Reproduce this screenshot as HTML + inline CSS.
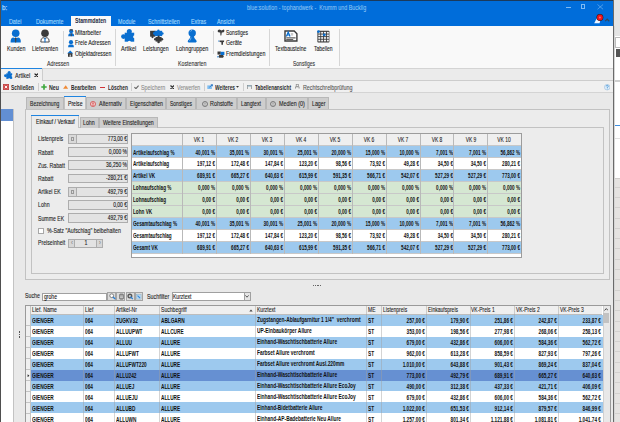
<!DOCTYPE html>
<html><head><meta charset="utf-8"><style>
html,body{margin:0;padding:0;}
body{width:620px;height:422px;overflow:hidden;position:relative;background:#ececec;font-family:'Liberation Sans', sans-serif;}
.b{position:absolute;}
.t{position:absolute;white-space:nowrap;line-height:1;}
</style></head><body>
<div class="b" style="left:614.00px;top:0.00px;width:6.00px;height:422.00px;background:#ffffff"></div>
<div class="b" style="left:614.00px;top:0.00px;width:6.00px;height:36.00px;background:#e4e4e4"></div>
<div class="b" style="left:614.50px;top:37.00px;width:5.50px;height:9.00px;background:#fff;border:1px solid #bbb;border-right:none;border-radius:1px"></div>
<div class="b" style="left:615.50px;top:49.00px;width:4.50px;height:8.00px;background:#555"></div>
<div class="b" style="left:614.00px;top:80.00px;width:6.00px;height:2.00px;background:#cfcfcf"></div>
<div class="b" style="left:614.00px;top:125.00px;width:6.00px;height:1.00px;background:#3d8ee0"></div>
<div class="b" style="left:614.00px;top:138.00px;width:6.00px;height:0.80px;background:#e2e2e2"></div>
<div class="b" style="left:614.00px;top:177.80px;width:6.00px;height:245.00px;background:#e5e3e1"></div>
<div class="b" style="left:614.00px;top:177.80px;width:6.00px;height:0.80px;background:#d0cecc"></div>
<div class="b" style="left:614.00px;top:186.60px;width:6.00px;height:0.90px;background:#d3d1cf"></div>
<div class="b" style="left:614.00px;top:196.90px;width:6.00px;height:0.90px;background:#d3d1cf"></div>
<div class="b" style="left:614.00px;top:207.20px;width:6.00px;height:0.90px;background:#d3d1cf"></div>
<div class="b" style="left:614.00px;top:217.50px;width:6.00px;height:0.90px;background:#d3d1cf"></div>
<div class="b" style="left:614.00px;top:227.80px;width:6.00px;height:0.90px;background:#d3d1cf"></div>
<div class="b" style="left:614.00px;top:238.10px;width:6.00px;height:0.90px;background:#d3d1cf"></div>
<div class="b" style="left:614.00px;top:248.40px;width:6.00px;height:0.90px;background:#d3d1cf"></div>
<div class="b" style="left:614.00px;top:258.70px;width:6.00px;height:0.90px;background:#d3d1cf"></div>
<div class="b" style="left:614.00px;top:269.00px;width:6.00px;height:0.90px;background:#d3d1cf"></div>
<div class="b" style="left:614.00px;top:279.30px;width:6.00px;height:0.90px;background:#d3d1cf"></div>
<div class="b" style="left:614.00px;top:289.60px;width:6.00px;height:0.90px;background:#d3d1cf"></div>
<div class="b" style="left:614.00px;top:299.90px;width:6.00px;height:0.90px;background:#d3d1cf"></div>
<div class="b" style="left:614.00px;top:310.20px;width:6.00px;height:0.90px;background:#d3d1cf"></div>
<div class="b" style="left:614.00px;top:320.50px;width:6.00px;height:0.90px;background:#d3d1cf"></div>
<div class="b" style="left:614.00px;top:330.80px;width:6.00px;height:0.90px;background:#d3d1cf"></div>
<div class="b" style="left:614.00px;top:341.10px;width:6.00px;height:0.90px;background:#d3d1cf"></div>
<div class="b" style="left:614.00px;top:351.40px;width:6.00px;height:0.90px;background:#d3d1cf"></div>
<div class="b" style="left:614.00px;top:361.70px;width:6.00px;height:0.90px;background:#d3d1cf"></div>
<div class="b" style="left:614.00px;top:372.00px;width:6.00px;height:0.90px;background:#d3d1cf"></div>
<div class="b" style="left:614.00px;top:382.30px;width:6.00px;height:0.90px;background:#d3d1cf"></div>
<div class="b" style="left:614.00px;top:392.60px;width:6.00px;height:0.90px;background:#d3d1cf"></div>
<div class="b" style="left:614.00px;top:402.90px;width:6.00px;height:0.90px;background:#d3d1cf"></div>
<div class="b" style="left:614.00px;top:413.20px;width:6.00px;height:0.90px;background:#d3d1cf"></div>
<div class="b" style="left:614.00px;top:423.50px;width:6.00px;height:0.90px;background:#d3d1cf"></div>
<div class="b" style="left:0.00px;top:0.00px;width:613.00px;height:422.00px;background:#e9e9e9"></div>
<div class="b" style="left:0.00px;top:0.00px;width:613.00px;height:26.00px;background:#006dda"></div>
<div class="b" style="left:0.00px;top:0.00px;width:614.00px;height:1.00px;background:#1b3a5c"></div>
<div class="b" style="left:0.00px;top:0.00px;width:1.00px;height:422.00px;background:#4f4f4f"></div>
<div class="t" style="left:2.00px;top:4.62px;font-size:7.17px;color:#a8d4fb;-webkit-text-stroke:0.25px #a8d4fb;transform:scaleX(0.8929);transform-origin:0 50%;">b:</div>
<div class="t" style="left:246.80px;top:5.05px;font-size:6.50px;color:#93c8f6;-webkit-text-stroke:0.06px #93c8f6;transform:scaleX(0.8308);transform-origin:0 50%;">blue:solution - tophandwerk - &nbsp;Krumm und Bucklig</div>
<div class="b" style="left:566.40px;top:6.90px;width:5.00px;height:0.60px;background:#7fbaf2"></div>
<div class="b" style="left:580.60px;top:4.40px;width:4.80px;height:4.80px;border:0.6px solid #7fbaf2;box-sizing:border-box"></div>
<svg class="b" style="left:597.20px;top:4.20px" width="6.6" height="5.8" viewBox="0 0 6.6 5.8"><path d="M0.5 0.5 L6.1 5.3 M6.1 0.5 L0.5 5.3" stroke="#7fbaf2" stroke-width="0.6"/></svg>
<svg class="b" style="left:592.00px;top:12.00px" width="20" height="12" viewBox="0 0 20 12"><path d="M2.2 11.2 L5.2 5.5 L8.6 6.5 L7.6 11.2 Z" fill="#eef6ff"/><circle cx="7.9" cy="5.5" r="3.4" fill="#2a1a1a"/><circle cx="7.9" cy="5.5" r="2.9" fill="#f0141c"/><circle cx="7.9" cy="5.5" r="1" fill="#ff6a6a"/><path d="M13.2 9.2 L15.2 7.2 L17.3 9.2" stroke="#33485c" stroke-width="1.2" fill="none"/></svg>
<div class="b" style="left:70.75px;top:15.80px;width:40.00px;height:10.40px;background:#f9f9f9"></div>
<div class="t" style="left:8.75px;top:18.85px;font-size:6.50px;color:#9fd6fd;-webkit-text-stroke:0.15px #9fd6fd;transform:scaleX(0.8231);transform-origin:0 50%;">Datei</div>
<div class="t" style="left:36.25px;top:18.85px;font-size:6.50px;color:#9fd6fd;-webkit-text-stroke:0.15px #9fd6fd;transform:scaleX(0.8231);transform-origin:0 50%;">Dokumente</div>
<div class="t" style="left:117.50px;top:18.85px;font-size:6.50px;color:#9fd6fd;-webkit-text-stroke:0.15px #9fd6fd;transform:scaleX(0.8231);transform-origin:0 50%;">Module</div>
<div class="t" style="left:147.50px;top:18.85px;font-size:6.50px;color:#9fd6fd;-webkit-text-stroke:0.15px #9fd6fd;transform:scaleX(0.8231);transform-origin:0 50%;">Schnittstellen</div>
<div class="t" style="left:191.25px;top:18.85px;font-size:6.50px;color:#9fd6fd;-webkit-text-stroke:0.15px #9fd6fd;transform:scaleX(0.8231);transform-origin:0 50%;">Extras</div>
<div class="t" style="left:217.00px;top:18.85px;font-size:6.50px;color:#9fd6fd;-webkit-text-stroke:0.15px #9fd6fd;transform:scaleX(0.8231);transform-origin:0 50%;">Ansicht</div>
<div class="t" style="left:75.00px;top:18.35px;font-size:6.50px;font-weight:bold;color:#1d2b44;transform:scaleX(0.8000);transform-origin:0 50%;">Stammdaten</div>
<div class="b" style="left:1.00px;top:26.00px;width:612.00px;height:42.00px;background:#f9f9f9"></div>
<div class="b" style="left:63.10px;top:31.30px;width:0.90px;height:22.50px;background:#d6d6d6"></div>
<div class="b" style="left:114.80px;top:28.90px;width:0.90px;height:36.70px;background:#d6d6d6"></div>
<div class="b" style="left:213.30px;top:31.00px;width:0.90px;height:22.80px;background:#d6d6d6"></div>
<div class="b" style="left:269.00px;top:28.50px;width:0.90px;height:37.10px;background:#d6d6d6"></div>
<div class="b" style="left:338.90px;top:28.70px;width:0.90px;height:36.90px;background:#d6d6d6"></div>
<div class="t" style="left:6.80px;top:45.85px;font-size:6.50px;color:#1a1a1a;-webkit-text-stroke:0.1px #1a1a1a;transform:scaleX(0.8215);transform-origin:0 50%;">Kunden</div>
<div class="t" style="left:31.90px;top:45.85px;font-size:6.50px;color:#1a1a1a;-webkit-text-stroke:0.1px #1a1a1a;transform:scaleX(0.8031);transform-origin:0 50%;">Lieferanten</div>
<div class="t" style="left:121.20px;top:45.85px;font-size:6.50px;color:#1a1a1a;-webkit-text-stroke:0.1px #1a1a1a;transform:scaleX(0.8462);transform-origin:0 50%;">Artikel</div>
<div class="t" style="left:143.30px;top:46.35px;font-size:6.50px;color:#1a1a1a;-webkit-text-stroke:0.1px #1a1a1a;transform:scaleX(0.8077);transform-origin:0 50%;">Leistungen</div>
<div class="t" style="left:175.80px;top:45.85px;font-size:6.50px;color:#1a1a1a;-webkit-text-stroke:0.1px #1a1a1a;transform:scaleX(0.8462);transform-origin:0 50%;">Lohngruppen</div>
<div class="t" style="left:275.40px;top:45.85px;font-size:6.50px;color:#1a1a1a;-webkit-text-stroke:0.1px #1a1a1a;transform:scaleX(0.7831);transform-origin:0 50%;">Textbausteine</div>
<div class="t" style="left:314.40px;top:45.85px;font-size:6.50px;color:#1a1a1a;-webkit-text-stroke:0.1px #1a1a1a;transform:scaleX(0.7692);transform-origin:0 50%;">Tabellen</div>
<div class="t" style="left:75.00px;top:29.75px;font-size:6.50px;color:#1a1a1a;-webkit-text-stroke:0.1px #1a1a1a;transform:scaleX(0.8462);transform-origin:0 50%;">Mitarbeiter</div>
<div class="t" style="left:75.00px;top:40.05px;font-size:6.50px;color:#1a1a1a;-webkit-text-stroke:0.1px #1a1a1a;transform:scaleX(0.8154);transform-origin:0 50%;">Freie Adressen</div>
<div class="t" style="left:75.00px;top:50.95px;font-size:6.50px;color:#1a1a1a;-webkit-text-stroke:0.1px #1a1a1a;transform:scaleX(0.7969);transform-origin:0 50%;">Objektadressen</div>
<div class="t" style="left:225.50px;top:29.55px;font-size:6.50px;color:#1a1a1a;-webkit-text-stroke:0.1px #1a1a1a;transform:scaleX(0.7692);transform-origin:0 50%;">Sonstiges</div>
<div class="t" style="left:225.50px;top:40.15px;font-size:6.50px;color:#1a1a1a;-webkit-text-stroke:0.1px #1a1a1a;transform:scaleX(0.8000);transform-origin:0 50%;">Geräte</div>
<div class="t" style="left:225.50px;top:50.75px;font-size:6.50px;color:#1a1a1a;-webkit-text-stroke:0.1px #1a1a1a;transform:scaleX(0.8123);transform-origin:0 50%;">Fremdleistungen</div>
<div class="t" style="left:47.40px;top:61.45px;font-size:6.50px;color:#333;-webkit-text-stroke:0.1px #333;transform:scaleX(0.8077);transform-origin:0 50%;">Adressen</div>
<div class="t" style="left:177.70px;top:61.45px;font-size:6.50px;color:#333;-webkit-text-stroke:0.1px #333;transform:scaleX(0.8123);transform-origin:0 50%;">Kostenarten</div>
<div class="t" style="left:292.80px;top:61.45px;font-size:6.50px;color:#333;-webkit-text-stroke:0.1px #333;transform:scaleX(0.7692);transform-origin:0 50%;">Sonstiges</div>
<svg class="b" style="left:10.00px;top:29.00px" width="12" height="14" viewBox="0 0 12 14"><circle cx="5.7" cy="4.2" r="3.8" fill="#0a6fd0"/><path d="M0.6 13.5 Q0.4 9 3 8.4 L5.7 9.2 L8.4 8.4 Q11 9 10.8 13.5 Z" fill="#0a6fd0"/><path d="M5 8.6 L6.4 8.6 L6.2 13.5 L5.2 13.5 Z" fill="#444"/></svg>
<svg class="b" style="left:39.50px;top:29.00px" width="12" height="14" viewBox="0 0 12 14"><circle cx="5" cy="4.2" r="3.8" fill="#3b3b3b"/><path d="M0.8 13 Q0.6 9.3 3 8.6 L5 9.4 L7 8.6 Q9.4 9.3 9.2 13 Z" fill="#fff" stroke="#3b3b3b" stroke-width="0.9"/><path d="M4.4 8.8 L5.6 8.8 L5.5 13.4 L4.5 13.4 Z" fill="#0a6fd0"/></svg>
<svg class="b" style="left:67.50px;top:28.80px" width="7" height="8" viewBox="0 0 7 8"><circle cx="3.2" cy="2.3" r="2" fill="#0a6fd0"/><path d="M1.2 1.6 L5.2 1.6 L4.6 0.3 L1.8 0.3Z" fill="#444"/><path d="M0.2 7.2 Q0.2 4.6 1.8 4.3 L4.6 4.3 Q6.2 4.6 6.2 7.2 Z" fill="#0a6fd0"/><rect x="2.8" y="4.3" width="0.9" height="2.9" fill="#444"/></svg>
<svg class="b" style="left:67.80px;top:39.50px" width="7" height="8" viewBox="0 0 7 8"><circle cx="3" cy="2.2" r="2.1" fill="#0a6fd0"/><path d="M0.1 7.3 Q0 4.7 1.7 4.5 L4.3 4.5 Q6 4.7 5.9 7.3 Z" fill="#0a6fd0"/></svg>
<svg class="b" style="left:67.40px;top:50.30px" width="7" height="7" viewBox="0 0 7 7"><path d="M0.2 3.4 L3.2 0.4 L6.3 3.4 Z" fill="#0a6fd0"/><rect x="1" y="3.2" width="4.4" height="3.6" fill="#3a3a3a"/><rect x="2.6" y="4.6" width="1.3" height="2.2" fill="#ccc"/></svg>
<svg class="b" style="left:121.00px;top:29.20px" width="15.0" height="15.0" viewBox="0 0 15.0 15.0"><g transform="scale(1.0)"><rect x="3.7" y="3.7" width="9.5" height="9" fill="#0a6fd0"/><circle cx="8.3" cy="2.6" r="2.5" fill="#0a6fd0"/><circle cx="2.5" cy="7.6" r="2.4" fill="#0a6fd0"/><circle cx="13.6" cy="7.8" r="1.5" fill="#f9f9f9"/><circle cx="8.4" cy="13.4" r="1.6" fill="#f9f9f9"/></g></svg>
<svg class="b" style="left:149.00px;top:29.00px" width="15" height="15" viewBox="0 0 15 15"><rect x="1.1" y="1.8" width="5.1" height="5.9" fill="#3b3b3b"/><circle cx="3.5" cy="8.1" r="1.1" fill="#3b3b3b"/><rect x="5.6" y="1.8" width="7.6" height="5.3" fill="#0a6fd0"/><circle cx="5.4" cy="4.5" r="1.4" fill="#0a6fd0"/><circle cx="13.3" cy="4.5" r="1.3" fill="#0a6fd0"/><circle cx="9.4" cy="1.8" r="1.2" fill="#0a6fd0"/><rect x="6.6" y="8" width="6" height="4.6" fill="#3b3b3b"/><circle cx="6.2" cy="10.3" r="1.2" fill="#3b3b3b"/><circle cx="13" cy="10.3" r="1.2" fill="#3b3b3b"/><circle cx="9.6" cy="13" r="1.3" fill="#3b3b3b"/><circle cx="9.6" cy="7.6" r="1.1" fill="#3b3b3b"/></svg>
<svg class="b" style="left:187.00px;top:29.30px" width="11" height="14" viewBox="0 0 11 14"><circle cx="5.2" cy="4.1" r="3.7" fill="#0a6fd0"/><path d="M3.6 6.8 L6.8 6.8 Q6.9 9.6 9.4 11.6 Q10.3 13.4 8.8 13.4 L1.6 13.4 Q0.1 13.4 1 11.6 Q3.5 9.6 3.6 6.8 Z" fill="#0a6fd0"/><path d="M3.2 2.6 Q3.8 1.5 5 1.5 M2.6 11.8 Q3.6 10.2 4.2 8.6" stroke="#d8ebfb" stroke-width="0.5" fill="none"/></svg>
<svg class="b" style="left:216.80px;top:29.20px" width="8" height="7" viewBox="0 0 8 7"><path d="M0.6 2.3 Q0.6 0.4 2.6 0.5 L4.6 1.4 L6.6 0.5 Q7.6 0.6 7.4 2.3 Q7 3.6 4.8 3.5 L4.3 6.6 L3.5 6.6 L3.2 3.5 Q0.9 3.6 0.6 2.3 Z" fill="#3b3b3b"/></svg>
<svg class="b" style="left:217.60px;top:40.30px" width="7" height="5.5" viewBox="0 0 7 5.5"><rect x="0.2" y="0.6" width="1.2" height="0.9" fill="#0a6fd0"/><path d="M1.6 0.6 L6.2 0.6 L6 2 L5 2.2 L5 4.8 L3.4 4.8 L3.4 2.2 L1.6 2 Z" fill="#3b3b3b"/></svg>
<svg class="b" style="left:216.80px;top:50.60px" width="8" height="7" viewBox="0 0 8 7"><path d="M0.5 0.5 L3.8 0.5 L3.8 3.6 L0.5 3.6 Z" fill="#3b3b3b"/><path d="M3.6 0.8 L7.4 0.8 L7.4 4 L3.6 4 Z" fill="#0a6fd0"/><path d="M2.2 4 L6.2 4 L6.7 5.4 L6 6.8 L2.2 6.8 L1.6 5.4 Z" fill="#3b3b3b"/><rect x="0.3" y="5.2" width="1.2" height="1.2" fill="#0a6fd0"/></svg>
<svg class="b" style="left:284.20px;top:30.40px" width="14" height="12" viewBox="0 0 14 12"><path d="M1 1 L10.2 1 L12.9 3.7 L12.9 11 L1 11 Z" fill="#fff" stroke="#3b3b3b" stroke-width="1.4"/><path d="M2.4 6.4 L4.2 2.2 L6 6.4" stroke="#0a6fd0" stroke-width="1.3" fill="none"/><path d="M3 5 L5.4 5" stroke="#0a6fd0" stroke-width="0.9"/><rect x="6.8" y="3" width="2.4" height="2.6" fill="#c8c8c8"/><rect x="2.2" y="7.4" width="9.4" height="1" fill="#3b3b3b"/><rect x="2.2" y="9.2" width="7" height="0.8" fill="#3b3b3b"/></svg>
<svg class="b" style="left:317.00px;top:29.60px" width="13" height="13" viewBox="0 0 13 13"><rect x="0.4" y="0.8" width="12" height="11.8" rx="0.8" fill="#3b3b3b"/><rect x="1.30" y="1.90" width="2.0" height="1.7" fill="#f2f2f2"/><rect x="1.30" y="4.50" width="2.0" height="1.7" fill="#f2f2f2"/><rect x="1.30" y="7.10" width="2.0" height="1.7" fill="#f2f2f2"/><rect x="1.30" y="9.70" width="2.0" height="1.7" fill="#f2f2f2"/><rect x="4.15" y="1.90" width="2.0" height="1.7" fill="#f2f2f2"/><rect x="4.15" y="4.50" width="2.0" height="1.7" fill="#f2f2f2"/><rect x="4.15" y="7.10" width="2.0" height="1.7" fill="#f2f2f2"/><rect x="4.15" y="9.70" width="2.0" height="1.7" fill="#f2f2f2"/><rect x="7.00" y="1.90" width="2.0" height="1.7" fill="#f2f2f2"/><rect x="7.00" y="4.50" width="2.0" height="1.7" fill="#f2f2f2"/><rect x="7.00" y="7.10" width="2.0" height="1.7" fill="#f2f2f2"/><rect x="7.00" y="9.70" width="2.0" height="1.7" fill="#f2f2f2"/><rect x="9.85" y="1.90" width="2.0" height="1.7" fill="#f2f2f2"/><rect x="9.85" y="4.50" width="2.0" height="1.7" fill="#f2f2f2"/><rect x="9.85" y="7.10" width="2.0" height="1.7" fill="#f2f2f2"/><rect x="9.85" y="9.70" width="2.0" height="1.7" fill="#f2f2f2"/><circle cx="1.5" cy="1.6" r="1.4" fill="#0a6fd0"/><circle cx="7.3" cy="4.8" r="1.4" fill="#0a6fd0"/></svg>
<div class="b" style="left:1.00px;top:68.00px;width:612.00px;height:12.20px;background:#ebebeb"></div>
<div class="b" style="left:1.00px;top:68.00px;width:612.00px;height:0.90px;background:#d4d4d4"></div>
<div class="b" style="left:42.00px;top:80.00px;width:571.00px;height:0.90px;background:#cdcdcd"></div>
<div class="b" style="left:1.00px;top:68.00px;width:41.30px;height:12.50px;background:#f0f0f0"></div>
<div class="b" style="left:1.00px;top:68.00px;width:41.30px;height:1.30px;background:#1f84e0"></div>
<div class="b" style="left:41.80px;top:68.00px;width:0.90px;height:12.30px;background:#cdcdcd"></div>
<svg class="b" style="left:3.80px;top:70.60px" width="9.3" height="9.3" viewBox="0 0 9.3 9.3"><g transform="scale(0.62)"><rect x="3.7" y="3.7" width="9.5" height="9" fill="#0a6fd0"/><circle cx="8.3" cy="2.6" r="2.5" fill="#0a6fd0"/><circle cx="2.5" cy="7.6" r="2.4" fill="#0a6fd0"/><circle cx="13.6" cy="7.8" r="1.5" fill="#f0f0f0"/><circle cx="8.4" cy="13.4" r="1.6" fill="#f0f0f0"/></g></svg>
<div class="t" style="left:14.70px;top:73.35px;font-size:6.50px;color:#222;-webkit-text-stroke:0.1px #222;transform:scaleX(0.8462);transform-origin:0 50%;">Artikel</div>
<svg class="b" style="left:33.60px;top:73.10px" width="4.6" height="4.4" viewBox="0 0 4.6 4.4"><path d="M0.6 0.6 L4 3.8 M4 0.6 L0.6 3.8" stroke="#1a1a1a" stroke-width="1.25"/></svg>
<div class="b" style="left:1.00px;top:80.90px;width:612.00px;height:11.80px;background:#f0f0f0"></div>
<div class="b" style="left:1.00px;top:92.40px;width:612.00px;height:0.90px;background:#d4d4d4"></div>
<div class="b" style="left:37.50px;top:83.30px;width:0.80px;height:8.20px;background:#cfcfcf"></div>
<div class="b" style="left:130.75px;top:83.30px;width:0.80px;height:8.20px;background:#cfcfcf"></div>
<div class="b" style="left:203.75px;top:83.30px;width:0.80px;height:8.20px;background:#cfcfcf"></div>
<div class="b" style="left:242.50px;top:83.30px;width:0.80px;height:8.20px;background:#cfcfcf"></div>
<svg class="b" style="left:3.00px;top:84.40px" width="6" height="6" viewBox="0 0 6 6"><rect x="0.3" y="0.3" width="5.4" height="5.4" fill="#d24a4a" stroke="#b83535" stroke-width="0.6"/><path d="M1.8 1.8 L4.2 4.2 M4.2 1.8 L1.8 4.2" stroke="#fff" stroke-width="0.9"/></svg>
<svg class="b" style="left:40.80px;top:84.20px" width="6" height="6" viewBox="0 0 6 6"><path d="M3 0.3 L3 5.7 M0.3 3 L5.7 3" stroke="#3aa63a" stroke-width="1.6"/></svg>
<svg class="b" style="left:63.00px;top:85.20px" width="5.4" height="4" viewBox="0 0 5.4 4"><path d="M2.7 0.3 L5.3 3.8 L0.1 3.8 Z" fill="#f08a35"/></svg>
<svg class="b" style="left:99.50px;top:86.60px" width="5.6" height="1.4" viewBox="0 0 5.6 1.4"><rect x="0" y="0" width="5.6" height="1.3" fill="#d13438"/></svg>
<svg class="b" style="left:134.20px;top:84.60px" width="5" height="4.4" viewBox="0 0 5 4.4"><path d="M0.4 2.2 L1.9 3.7 L4.6 0.6" stroke="#666" stroke-width="1.1" fill="none"/></svg>
<svg class="b" style="left:169.50px;top:84.80px" width="4.6" height="4.4" viewBox="0 0 4.6 4.4"><path d="M0.5 0.5 L4.1 3.9 M4.1 0.5 L0.5 3.9" stroke="#333" stroke-width="1.3"/></svg>
<svg class="b" style="left:207.00px;top:84.40px" width="6" height="5.4" viewBox="0 0 6 5.4"><rect x="0.3" y="1.4" width="4.6" height="3.6" fill="#7fbdf0"/><path d="M2.4 3.2 L5.4 0.8 M3.8 0.7 L5.5 0.7 L5.5 2.3" stroke="#1f6fc0" stroke-width="0.8" fill="none"/></svg>
<svg class="b" style="left:236.30px;top:86.40px" width="3" height="2" viewBox="0 0 3 2"><path d="M0 0 L3 0 L1.5 1.8 Z" fill="#333"/></svg>
<svg class="b" style="left:246.80px;top:84.50px" width="5" height="4.8" viewBox="0 0 5 4.8"><rect x="0.4" y="0.4" width="4.2" height="4" fill="#eee" stroke="#777" stroke-width="0.6"/><rect x="0.4" y="0.4" width="4.2" height="1.1" fill="#8ab"/></svg>
<svg class="b" style="left:295.00px;top:84.40px" width="4.6" height="5" viewBox="0 0 4.6 5"><rect x="1.2" y="0.3" width="2.2" height="2" fill="none" stroke="#8a8a8a" stroke-width="0.7"/><path d="M0.5 4.6 L0.5 2.8 L4.1 2.8 L4.1 4.6" stroke="#8a8a8a" stroke-width="0.8" fill="none"/></svg>
<div class="t" style="left:11.25px;top:84.55px;font-size:6.50px;font-weight:bold;color:#2b2b2b;transform:scaleX(0.7492);transform-origin:0 50%;">Schließen</div>
<div class="t" style="left:48.75px;top:84.55px;font-size:6.50px;font-weight:bold;color:#2b2b2b;transform:scaleX(0.8154);transform-origin:0 50%;">Neu</div>
<div class="t" style="left:70.75px;top:84.55px;font-size:6.50px;font-weight:bold;color:#2b2b2b;transform:scaleX(0.7446);transform-origin:0 50%;">Bearbeiten</div>
<div class="t" style="left:107.50px;top:84.55px;font-size:6.50px;font-weight:bold;color:#2b2b2b;transform:scaleX(0.7477);transform-origin:0 50%;">Löschen</div>
<div class="t" style="left:141.25px;top:84.55px;font-size:6.50px;color:#8c8c8c;-webkit-text-stroke:0.1px #8c8c8c;transform:scaleX(0.8308);transform-origin:0 50%;">Speichern</div>
<div class="t" style="left:176.75px;top:84.55px;font-size:6.50px;color:#8c8c8c;-webkit-text-stroke:0.1px #8c8c8c;transform:scaleX(0.7938);transform-origin:0 50%;">Verwerfen</div>
<div class="t" style="left:215.00px;top:84.55px;font-size:6.50px;font-weight:bold;color:#2b2b2b;transform:scaleX(0.7415);transform-origin:0 50%;">Weiteres</div>
<div class="t" style="left:254.50px;top:84.55px;font-size:6.50px;font-weight:bold;color:#2b2b2b;transform:scaleX(0.7400);transform-origin:0 50%;">Tabellenansicht</div>
<div class="t" style="left:302.50px;top:84.55px;font-size:6.50px;color:#555555;-webkit-text-stroke:0.1px #555555;transform:scaleX(0.8246);transform-origin:0 50%;">Rechtschreibprüfung</div>
<svg class="b" style="left:603.80px;top:84.40px" width="6.4" height="6.4" viewBox="0 0 6.4 6.4"><circle cx="3.2" cy="3.2" r="2.8" fill="#dcecf9" stroke="#8fb4d6" stroke-width="0.5"/><path d="M2.2 2.4 Q2.3 1.3 3.3 1.3 Q4.4 1.4 4.3 2.4 Q4.2 3 3.3 3.4 L3.3 4" stroke="#2e86d0" stroke-width="0.7" fill="none"/><circle cx="3.3" cy="4.9" r="0.45" fill="#2e86d0"/></svg>
<div class="b" style="left:1.00px;top:109.20px;width:12.40px;height:313.00px;background:#ffffff"></div>
<div class="b" style="left:13.20px;top:109.20px;width:0.90px;height:313.00px;background:#c3c3c3"></div>
<div class="b" style="left:1.00px;top:109.20px;width:12.30px;height:11.40px;background:#628fd3"></div>
<div class="b" style="left:25.00px;top:108.50px;width:585.30px;height:171.60px;background:#ececec;border:0.9px solid #c2c2c2;box-sizing:border-box"></div>
<div class="b" style="left:25.60px;top:97.00px;width:38.15px;height:12.30px;background:#cecece;border:0.9px solid #b8b8b8;border-bottom:none;box-sizing:border-box"></div>
<div class="t" style="left:30.00px;top:101.15px;font-size:6.50px;color:#222;-webkit-text-stroke:0.1px #222;transform:scaleX(0.7785);transform-origin:0 50%;">Bezeichnung</div>
<div class="b" style="left:85.75px;top:97.00px;width:39.75px;height:12.30px;background:#cecece;border:0.9px solid #b8b8b8;border-bottom:none;box-sizing:border-box"></div>
<div class="t" style="left:99.25px;top:101.15px;font-size:6.50px;color:#222;-webkit-text-stroke:0.1px #222;transform:scaleX(0.8400);transform-origin:0 50%;">Alternativ</div>
<svg class="b" style="left:90.40px;top:100.60px" width="6" height="6" viewBox="0 0 6 6"><circle cx="3" cy="3" r="2.6" fill="#f2c4c4" stroke="#d04545" stroke-width="0.7"/><rect x="2.55" y="1.4" width="0.9" height="2.1" fill="#c83030"/><rect x="2.55" y="4" width="0.9" height="0.8" fill="#c83030"/></svg>
<div class="b" style="left:125.50px;top:97.00px;width:40.75px;height:12.30px;background:#cecece;border:0.9px solid #b8b8b8;border-bottom:none;box-sizing:border-box"></div>
<div class="t" style="left:130.00px;top:101.15px;font-size:6.50px;color:#222;-webkit-text-stroke:0.1px #222;transform:scaleX(0.8015);transform-origin:0 50%;">Eigenschaften</div>
<div class="b" style="left:166.25px;top:97.00px;width:30.00px;height:12.30px;background:#cecece;border:0.9px solid #b8b8b8;border-bottom:none;box-sizing:border-box"></div>
<div class="t" style="left:169.50px;top:101.15px;font-size:6.50px;color:#222;-webkit-text-stroke:0.1px #222;transform:scaleX(0.7677);transform-origin:0 50%;">Sonstiges</div>
<div class="b" style="left:196.25px;top:97.00px;width:40.50px;height:12.30px;background:#cecece;border:0.9px solid #b8b8b8;border-bottom:none;box-sizing:border-box"></div>
<div class="t" style="left:210.00px;top:101.15px;font-size:6.50px;color:#222;-webkit-text-stroke:0.1px #222;transform:scaleX(0.8308);transform-origin:0 50%;">Rohstoffe</div>
<svg class="b" style="left:202.00px;top:100.60px" width="6" height="6" viewBox="0 0 6 6"><circle cx="3" cy="3" r="2.5" fill="none" stroke="#707070" stroke-width="0.9"/><rect x="2.6" y="1.5" width="0.8" height="2" fill="#8a8a8a"/><rect x="2.6" y="4" width="0.8" height="0.7" fill="#8a8a8a"/></svg>
<div class="b" style="left:236.75px;top:97.00px;width:28.75px;height:12.30px;background:#cecece;border:0.9px solid #b8b8b8;border-bottom:none;box-sizing:border-box"></div>
<div class="t" style="left:241.25px;top:101.15px;font-size:6.50px;color:#222;-webkit-text-stroke:0.1px #222;transform:scaleX(0.8015);transform-origin:0 50%;">Langtext</div>
<div class="b" style="left:265.50px;top:97.00px;width:42.75px;height:12.30px;background:#cecece;border:0.9px solid #b8b8b8;border-bottom:none;box-sizing:border-box"></div>
<div class="t" style="left:278.75px;top:101.15px;font-size:6.50px;color:#222;-webkit-text-stroke:0.1px #222;transform:scaleX(0.8292);transform-origin:0 50%;">Medien (0)</div>
<svg class="b" style="left:270.00px;top:100.60px" width="6" height="6" viewBox="0 0 6 6"><circle cx="3" cy="3" r="2.5" fill="none" stroke="#707070" stroke-width="0.9"/><rect x="2.6" y="1.5" width="0.8" height="2" fill="#8a8a8a"/><rect x="2.6" y="4" width="0.8" height="0.7" fill="#8a8a8a"/></svg>
<div class="b" style="left:308.25px;top:97.00px;width:20.50px;height:12.30px;background:#cecece;border:0.9px solid #b8b8b8;border-bottom:none;box-sizing:border-box"></div>
<div class="t" style="left:312.00px;top:101.15px;font-size:6.50px;color:#222;-webkit-text-stroke:0.1px #222;transform:scaleX(0.8123);transform-origin:0 50%;">Lager</div>
<div class="b" style="left:63.75px;top:96.00px;width:22.00px;height:13.40px;background:#ececec;border-left:0.9px solid #c2c2c2;border-right:0.9px solid #c2c2c2;box-sizing:border-box"></div>
<div class="b" style="left:63.75px;top:96.00px;width:22.00px;height:1.30px;background:#1f84e0"></div>
<div class="t" style="left:67.50px;top:100.75px;font-size:6.50px;color:#111;-webkit-text-stroke:0.1px #111;transform:scaleX(0.7862);transform-origin:0 50%;">Preise</div>
<div class="b" style="left:30.90px;top:126.80px;width:573.20px;height:147.60px;background:#ececec;border:0.9px solid #c2c2c2;box-sizing:border-box"></div>
<div class="b" style="left:79.50px;top:116.80px;width:19.75px;height:10.80px;background:#cecece;border:0.9px solid #b8b8b8;border-bottom:none;box-sizing:border-box"></div>
<div class="t" style="left:83.25px;top:119.75px;font-size:6.50px;color:#222;-webkit-text-stroke:0.1px #222;transform:scaleX(0.8123);transform-origin:0 50%;">Lohn</div>
<div class="b" style="left:99.25px;top:116.80px;width:58.25px;height:10.80px;background:#cecece;border:0.9px solid #b8b8b8;border-bottom:none;box-sizing:border-box"></div>
<div class="t" style="left:103.00px;top:119.75px;font-size:6.50px;color:#222;-webkit-text-stroke:0.1px #222;transform:scaleX(0.8046);transform-origin:0 50%;">Weitere Einstellungen</div>
<div class="b" style="left:30.90px;top:115.00px;width:48.60px;height:12.60px;background:#ececec;border-left:0.9px solid #c2c2c2;border-right:0.9px solid #c2c2c2;box-sizing:border-box"></div>
<div class="b" style="left:30.90px;top:115.00px;width:48.60px;height:1.30px;background:#1f84e0"></div>
<div class="t" style="left:36.25px;top:119.45px;font-size:6.50px;color:#111;-webkit-text-stroke:0.1px #111;transform:scaleX(0.7892);transform-origin:0 50%;">Einkauf / Verkauf</div>
<div class="t" style="left:37.70px;top:136.35px;font-size:6.50px;color:#222;-webkit-text-stroke:0.1px #222;transform:scaleX(0.8000);transform-origin:0 50%;">Listenpreis</div>
<div class="b" style="left:67.60px;top:134.10px;width:60.20px;height:9.60px;background:#e3e3e3;border:0.9px solid #adadad;box-sizing:border-box"></div>
<div class="b" style="left:67.60px;top:134.10px;width:9.10px;height:9.60px;background:#d9d9d9;border:0.9px solid #adadad;box-sizing:border-box"></div>
<div class="b" style="left:70.60px;top:136.70px;width:3.00px;height:4.20px;border:0.7px solid #999;box-sizing:border-box"></div>
<div class="t" style="left:127.00px;top:135.95px;font-size:6.50px;color:#111;-webkit-text-stroke:0.1px #111;transform:translateX(-100%) scaleX(0.7615);transform-origin:100% 50%;">773,00 €</div>
<div class="t" style="left:37.70px;top:149.55px;font-size:6.50px;color:#222;-webkit-text-stroke:0.1px #222;transform:scaleX(0.8000);transform-origin:0 50%;">Rabatt</div>
<div class="b" style="left:67.60px;top:147.30px;width:60.20px;height:9.60px;background:#e3e3e3;border:0.9px solid #adadad;box-sizing:border-box"></div>
<div class="t" style="left:127.00px;top:149.15px;font-size:6.50px;color:#111;-webkit-text-stroke:0.1px #111;transform:translateX(-100%) scaleX(0.7615);transform-origin:100% 50%;">0,000 %</div>
<div class="t" style="left:37.70px;top:162.55px;font-size:6.50px;color:#222;-webkit-text-stroke:0.1px #222;transform:scaleX(0.8000);transform-origin:0 50%;">Zus. Rabatt</div>
<div class="b" style="left:67.60px;top:160.30px;width:60.20px;height:9.60px;background:#e3e3e3;border:0.9px solid #adadad;box-sizing:border-box"></div>
<div class="t" style="left:127.00px;top:162.15px;font-size:6.50px;color:#111;-webkit-text-stroke:0.1px #111;transform:translateX(-100%) scaleX(0.7615);transform-origin:100% 50%;">36,250 %</div>
<div class="t" style="left:37.70px;top:175.75px;font-size:6.50px;color:#222;-webkit-text-stroke:0.1px #222;transform:scaleX(0.8000);transform-origin:0 50%;">Rabatt</div>
<div class="b" style="left:67.60px;top:173.50px;width:60.20px;height:9.60px;background:#e3e3e3;border:0.9px solid #adadad;box-sizing:border-box"></div>
<div class="t" style="left:127.00px;top:175.35px;font-size:6.50px;color:#111;-webkit-text-stroke:0.1px #111;transform:translateX(-100%) scaleX(0.7615);transform-origin:100% 50%;">-280,21 €</div>
<div class="t" style="left:37.70px;top:189.25px;font-size:6.50px;color:#222;-webkit-text-stroke:0.1px #222;transform:scaleX(0.8000);transform-origin:0 50%;">Artikel EK</div>
<div class="b" style="left:67.60px;top:187.00px;width:60.20px;height:9.60px;background:#e3e3e3;border:0.9px solid #adadad;box-sizing:border-box"></div>
<div class="b" style="left:67.60px;top:187.00px;width:9.10px;height:9.60px;background:#d9d9d9;border:0.9px solid #adadad;box-sizing:border-box"></div>
<div class="b" style="left:70.60px;top:189.60px;width:3.00px;height:4.20px;border:0.7px solid #999;box-sizing:border-box"></div>
<div class="t" style="left:127.00px;top:188.85px;font-size:6.50px;color:#111;-webkit-text-stroke:0.1px #111;transform:translateX(-100%) scaleX(0.7615);transform-origin:100% 50%;">492,79 €</div>
<div class="t" style="left:37.70px;top:202.45px;font-size:6.50px;color:#222;-webkit-text-stroke:0.1px #222;transform:scaleX(0.8000);transform-origin:0 50%;">Lohn</div>
<div class="b" style="left:67.60px;top:200.20px;width:60.20px;height:9.60px;background:#e3e3e3;border:0.9px solid #adadad;box-sizing:border-box"></div>
<div class="t" style="left:127.00px;top:202.05px;font-size:6.50px;color:#111;-webkit-text-stroke:0.1px #111;transform:translateX(-100%) scaleX(0.7615);transform-origin:100% 50%;">0,00 €</div>
<div class="t" style="left:37.70px;top:215.55px;font-size:6.50px;color:#222;-webkit-text-stroke:0.1px #222;transform:scaleX(0.8000);transform-origin:0 50%;">Summe EK</div>
<div class="b" style="left:67.60px;top:213.30px;width:60.20px;height:9.60px;background:#e3e3e3;border:0.9px solid #adadad;box-sizing:border-box"></div>
<div class="t" style="left:127.00px;top:215.15px;font-size:6.50px;color:#111;-webkit-text-stroke:0.1px #111;transform:translateX(-100%) scaleX(0.7615);transform-origin:100% 50%;">492,79 €</div>
<div class="b" style="left:38.20px;top:228.20px;width:5.80px;height:5.80px;background:#fff;border:0.8px solid #a8a8a8;box-sizing:border-box"></div>
<div class="t" style="left:46.50px;top:228.25px;font-size:6.50px;color:#222;-webkit-text-stroke:0.1px #222;transform:scaleX(0.8092);transform-origin:0 50%;">%-Satz "Aufschlag" beibehalten</div>
<div class="t" style="left:37.80px;top:240.35px;font-size:6.50px;color:#222;-webkit-text-stroke:0.1px #222;transform:scaleX(0.8000);transform-origin:0 50%;">Preiseinheit</div>
<div class="b" style="left:67.90px;top:238.70px;width:35.60px;height:9.30px;background:#e3e3e3;border:0.9px solid #adadad;box-sizing:border-box"></div>
<div class="b" style="left:67.90px;top:238.70px;width:7.20px;height:9.30px;background:#d7d7d7;border:0.9px solid #adadad;box-sizing:border-box"></div>
<div class="b" style="left:96.30px;top:238.70px;width:7.20px;height:9.30px;background:#d7d7d7;border:0.9px solid #adadad;box-sizing:border-box"></div>
<div class="t" style="left:71.50px;top:240.45px;font-size:6.50px;color:#888;-webkit-text-stroke:0.1px #888;transform:translateX(-50%) scaleX(0.8462);transform-origin:50% 50%;">‹</div>
<div class="t" style="left:99.90px;top:240.45px;font-size:6.50px;color:#888;-webkit-text-stroke:0.1px #888;transform:translateX(-50%) scaleX(0.8462);transform-origin:50% 50%;">›</div>
<div class="t" style="left:85.60px;top:240.45px;font-size:6.50px;color:#222;-webkit-text-stroke:0.1px #222;transform:translateX(-50%) scaleX(0.8154);transform-origin:50% 50%;">1</div>
<div class="b" style="left:131.30px;top:133.30px;width:390.60px;height:124.40px;background:#fff;border:1px solid #9c9c9c;box-sizing:border-box"></div>
<div class="b" style="left:132.40px;top:134.40px;width:388.60px;height:11.20px;background:#efefef"></div>
<div class="b" style="left:132.40px;top:145.60px;width:388.60px;height:11.94px;background:#9dc9ee"></div>
<div class="b" style="left:132.40px;top:145.30px;width:388.60px;height:0.60px;background:#c8c8c8"></div>
<div class="t" style="left:133.00px;top:149.52px;font-size:6.50px;font-weight:bold;color:#111;transform:scaleX(0.7138);transform-origin:0 50%;">Artikelaufschlag %</div>
<div class="t" style="left:215.20px;top:149.52px;font-size:6.50px;font-weight:bold;color:#111;transform:translateX(-100%) scaleX(0.7077);transform-origin:100% 50%;">40,001 %</div>
<div class="t" style="left:249.10px;top:149.52px;font-size:6.50px;font-weight:bold;color:#111;transform:translateX(-100%) scaleX(0.7077);transform-origin:100% 50%;">35,001 %</div>
<div class="t" style="left:283.00px;top:149.52px;font-size:6.50px;font-weight:bold;color:#111;transform:translateX(-100%) scaleX(0.7077);transform-origin:100% 50%;">30,001 %</div>
<div class="t" style="left:317.20px;top:149.52px;font-size:6.50px;font-weight:bold;color:#111;transform:translateX(-100%) scaleX(0.7077);transform-origin:100% 50%;">25,001 %</div>
<div class="t" style="left:351.00px;top:149.52px;font-size:6.50px;font-weight:bold;color:#111;transform:translateX(-100%) scaleX(0.7077);transform-origin:100% 50%;">20,000 %</div>
<div class="t" style="left:384.60px;top:149.52px;font-size:6.50px;font-weight:bold;color:#111;transform:translateX(-100%) scaleX(0.7077);transform-origin:100% 50%;">15,000 %</div>
<div class="t" style="left:418.60px;top:149.52px;font-size:6.50px;font-weight:bold;color:#111;transform:translateX(-100%) scaleX(0.7077);transform-origin:100% 50%;">10,000 %</div>
<div class="t" style="left:452.50px;top:149.52px;font-size:6.50px;font-weight:bold;color:#111;transform:translateX(-100%) scaleX(0.7077);transform-origin:100% 50%;">7,001 %</div>
<div class="t" style="left:485.90px;top:149.52px;font-size:6.50px;font-weight:bold;color:#111;transform:translateX(-100%) scaleX(0.7077);transform-origin:100% 50%;">7,001 %</div>
<div class="t" style="left:520.10px;top:149.52px;font-size:6.50px;font-weight:bold;color:#111;transform:translateX(-100%) scaleX(0.7077);transform-origin:100% 50%;">56,862 %</div>
<div class="b" style="left:132.40px;top:157.54px;width:388.60px;height:11.94px;background:#ffffff"></div>
<div class="b" style="left:132.40px;top:157.24px;width:388.60px;height:0.60px;background:#c8c8c8"></div>
<div class="t" style="left:133.00px;top:161.46px;font-size:6.50px;font-weight:bold;color:#111;transform:scaleX(0.7138);transform-origin:0 50%;">Artikelaufschlag</div>
<div class="t" style="left:215.20px;top:161.46px;font-size:6.50px;font-weight:bold;color:#111;transform:translateX(-100%) scaleX(0.7077);transform-origin:100% 50%;">197,12 €</div>
<div class="t" style="left:249.10px;top:161.46px;font-size:6.50px;font-weight:bold;color:#111;transform:translateX(-100%) scaleX(0.7077);transform-origin:100% 50%;">172,48 €</div>
<div class="t" style="left:283.00px;top:161.46px;font-size:6.50px;font-weight:bold;color:#111;transform:translateX(-100%) scaleX(0.7077);transform-origin:100% 50%;">147,84 €</div>
<div class="t" style="left:317.20px;top:161.46px;font-size:6.50px;font-weight:bold;color:#111;transform:translateX(-100%) scaleX(0.7077);transform-origin:100% 50%;">123,20 €</div>
<div class="t" style="left:351.00px;top:161.46px;font-size:6.50px;font-weight:bold;color:#111;transform:translateX(-100%) scaleX(0.7077);transform-origin:100% 50%;">98,56 €</div>
<div class="t" style="left:384.60px;top:161.46px;font-size:6.50px;font-weight:bold;color:#111;transform:translateX(-100%) scaleX(0.7077);transform-origin:100% 50%;">73,92 €</div>
<div class="t" style="left:418.60px;top:161.46px;font-size:6.50px;font-weight:bold;color:#111;transform:translateX(-100%) scaleX(0.7077);transform-origin:100% 50%;">49,28 €</div>
<div class="t" style="left:452.50px;top:161.46px;font-size:6.50px;font-weight:bold;color:#111;transform:translateX(-100%) scaleX(0.7077);transform-origin:100% 50%;">34,50 €</div>
<div class="t" style="left:485.90px;top:161.46px;font-size:6.50px;font-weight:bold;color:#111;transform:translateX(-100%) scaleX(0.7077);transform-origin:100% 50%;">34,50 €</div>
<div class="t" style="left:520.10px;top:161.46px;font-size:6.50px;font-weight:bold;color:#111;transform:translateX(-100%) scaleX(0.7077);transform-origin:100% 50%;">280,21 €</div>
<div class="b" style="left:132.40px;top:169.48px;width:388.60px;height:11.94px;background:#9dc9ee"></div>
<div class="b" style="left:132.40px;top:169.18px;width:388.60px;height:0.60px;background:#c8c8c8"></div>
<div class="t" style="left:133.00px;top:173.40px;font-size:6.50px;font-weight:bold;color:#111;transform:scaleX(0.7138);transform-origin:0 50%;">Artikel VK</div>
<div class="t" style="left:215.20px;top:173.40px;font-size:6.50px;font-weight:bold;color:#111;transform:translateX(-100%) scaleX(0.7077);transform-origin:100% 50%;">689,91 €</div>
<div class="t" style="left:249.10px;top:173.40px;font-size:6.50px;font-weight:bold;color:#111;transform:translateX(-100%) scaleX(0.7077);transform-origin:100% 50%;">665,27 €</div>
<div class="t" style="left:283.00px;top:173.40px;font-size:6.50px;font-weight:bold;color:#111;transform:translateX(-100%) scaleX(0.7077);transform-origin:100% 50%;">640,63 €</div>
<div class="t" style="left:317.20px;top:173.40px;font-size:6.50px;font-weight:bold;color:#111;transform:translateX(-100%) scaleX(0.7077);transform-origin:100% 50%;">615,99 €</div>
<div class="t" style="left:351.00px;top:173.40px;font-size:6.50px;font-weight:bold;color:#111;transform:translateX(-100%) scaleX(0.7077);transform-origin:100% 50%;">591,35 €</div>
<div class="t" style="left:384.60px;top:173.40px;font-size:6.50px;font-weight:bold;color:#111;transform:translateX(-100%) scaleX(0.7077);transform-origin:100% 50%;">566,71 €</div>
<div class="t" style="left:418.60px;top:173.40px;font-size:6.50px;font-weight:bold;color:#111;transform:translateX(-100%) scaleX(0.7077);transform-origin:100% 50%;">542,07 €</div>
<div class="t" style="left:452.50px;top:173.40px;font-size:6.50px;font-weight:bold;color:#111;transform:translateX(-100%) scaleX(0.7077);transform-origin:100% 50%;">527,29 €</div>
<div class="t" style="left:485.90px;top:173.40px;font-size:6.50px;font-weight:bold;color:#111;transform:translateX(-100%) scaleX(0.7077);transform-origin:100% 50%;">527,29 €</div>
<div class="t" style="left:520.10px;top:173.40px;font-size:6.50px;font-weight:bold;color:#111;transform:translateX(-100%) scaleX(0.7077);transform-origin:100% 50%;">773,00 €</div>
<div class="b" style="left:132.40px;top:181.42px;width:388.60px;height:11.94px;background:#d5e7d2"></div>
<div class="b" style="left:132.40px;top:181.12px;width:388.60px;height:0.60px;background:#c8c8c8"></div>
<div class="t" style="left:133.00px;top:185.34px;font-size:6.50px;font-weight:bold;color:#111;transform:scaleX(0.7138);transform-origin:0 50%;">Lohnaufschlag %</div>
<div class="t" style="left:215.20px;top:185.34px;font-size:6.50px;font-weight:bold;color:#111;transform:translateX(-100%) scaleX(0.7077);transform-origin:100% 50%;">0,000 %</div>
<div class="t" style="left:249.10px;top:185.34px;font-size:6.50px;font-weight:bold;color:#111;transform:translateX(-100%) scaleX(0.7077);transform-origin:100% 50%;">0,000 %</div>
<div class="t" style="left:283.00px;top:185.34px;font-size:6.50px;font-weight:bold;color:#111;transform:translateX(-100%) scaleX(0.7077);transform-origin:100% 50%;">0,000 %</div>
<div class="t" style="left:317.20px;top:185.34px;font-size:6.50px;font-weight:bold;color:#111;transform:translateX(-100%) scaleX(0.7077);transform-origin:100% 50%;">0,000 %</div>
<div class="t" style="left:351.00px;top:185.34px;font-size:6.50px;font-weight:bold;color:#111;transform:translateX(-100%) scaleX(0.7077);transform-origin:100% 50%;">0,000 %</div>
<div class="t" style="left:384.60px;top:185.34px;font-size:6.50px;font-weight:bold;color:#111;transform:translateX(-100%) scaleX(0.7077);transform-origin:100% 50%;">0,000 %</div>
<div class="t" style="left:418.60px;top:185.34px;font-size:6.50px;font-weight:bold;color:#111;transform:translateX(-100%) scaleX(0.7077);transform-origin:100% 50%;">0,000 %</div>
<div class="t" style="left:452.50px;top:185.34px;font-size:6.50px;font-weight:bold;color:#111;transform:translateX(-100%) scaleX(0.7077);transform-origin:100% 50%;">0,000 %</div>
<div class="t" style="left:485.90px;top:185.34px;font-size:6.50px;font-weight:bold;color:#111;transform:translateX(-100%) scaleX(0.7077);transform-origin:100% 50%;">0,000 %</div>
<div class="t" style="left:520.10px;top:185.34px;font-size:6.50px;font-weight:bold;color:#111;transform:translateX(-100%) scaleX(0.7077);transform-origin:100% 50%;">0,000 %</div>
<div class="b" style="left:132.40px;top:193.36px;width:388.60px;height:11.94px;background:#d5e7d2"></div>
<div class="b" style="left:132.40px;top:193.06px;width:388.60px;height:0.60px;background:#c8c8c8"></div>
<div class="t" style="left:133.00px;top:197.28px;font-size:6.50px;font-weight:bold;color:#111;transform:scaleX(0.7138);transform-origin:0 50%;">Lohnaufschlag</div>
<div class="t" style="left:215.20px;top:197.28px;font-size:6.50px;font-weight:bold;color:#111;transform:translateX(-100%) scaleX(0.7077);transform-origin:100% 50%;">0,00 €</div>
<div class="t" style="left:249.10px;top:197.28px;font-size:6.50px;font-weight:bold;color:#111;transform:translateX(-100%) scaleX(0.7077);transform-origin:100% 50%;">0,00 €</div>
<div class="t" style="left:283.00px;top:197.28px;font-size:6.50px;font-weight:bold;color:#111;transform:translateX(-100%) scaleX(0.7077);transform-origin:100% 50%;">0,00 €</div>
<div class="t" style="left:317.20px;top:197.28px;font-size:6.50px;font-weight:bold;color:#111;transform:translateX(-100%) scaleX(0.7077);transform-origin:100% 50%;">0,00 €</div>
<div class="t" style="left:351.00px;top:197.28px;font-size:6.50px;font-weight:bold;color:#111;transform:translateX(-100%) scaleX(0.7077);transform-origin:100% 50%;">0,00 €</div>
<div class="t" style="left:384.60px;top:197.28px;font-size:6.50px;font-weight:bold;color:#111;transform:translateX(-100%) scaleX(0.7077);transform-origin:100% 50%;">0,00 €</div>
<div class="t" style="left:418.60px;top:197.28px;font-size:6.50px;font-weight:bold;color:#111;transform:translateX(-100%) scaleX(0.7077);transform-origin:100% 50%;">0,00 €</div>
<div class="t" style="left:452.50px;top:197.28px;font-size:6.50px;font-weight:bold;color:#111;transform:translateX(-100%) scaleX(0.7077);transform-origin:100% 50%;">0,00 €</div>
<div class="t" style="left:485.90px;top:197.28px;font-size:6.50px;font-weight:bold;color:#111;transform:translateX(-100%) scaleX(0.7077);transform-origin:100% 50%;">0,00 €</div>
<div class="t" style="left:520.10px;top:197.28px;font-size:6.50px;font-weight:bold;color:#111;transform:translateX(-100%) scaleX(0.7077);transform-origin:100% 50%;">0,00 €</div>
<div class="b" style="left:132.40px;top:205.30px;width:388.60px;height:11.94px;background:#d5e7d2"></div>
<div class="b" style="left:132.40px;top:205.00px;width:388.60px;height:0.60px;background:#c8c8c8"></div>
<div class="t" style="left:133.00px;top:209.22px;font-size:6.50px;font-weight:bold;color:#111;transform:scaleX(0.7138);transform-origin:0 50%;">Lohn VK</div>
<div class="t" style="left:215.20px;top:209.22px;font-size:6.50px;font-weight:bold;color:#111;transform:translateX(-100%) scaleX(0.7077);transform-origin:100% 50%;">0,00 €</div>
<div class="t" style="left:249.10px;top:209.22px;font-size:6.50px;font-weight:bold;color:#111;transform:translateX(-100%) scaleX(0.7077);transform-origin:100% 50%;">0,00 €</div>
<div class="t" style="left:283.00px;top:209.22px;font-size:6.50px;font-weight:bold;color:#111;transform:translateX(-100%) scaleX(0.7077);transform-origin:100% 50%;">0,00 €</div>
<div class="t" style="left:317.20px;top:209.22px;font-size:6.50px;font-weight:bold;color:#111;transform:translateX(-100%) scaleX(0.7077);transform-origin:100% 50%;">0,00 €</div>
<div class="t" style="left:351.00px;top:209.22px;font-size:6.50px;font-weight:bold;color:#111;transform:translateX(-100%) scaleX(0.7077);transform-origin:100% 50%;">0,00 €</div>
<div class="t" style="left:384.60px;top:209.22px;font-size:6.50px;font-weight:bold;color:#111;transform:translateX(-100%) scaleX(0.7077);transform-origin:100% 50%;">0,00 €</div>
<div class="t" style="left:418.60px;top:209.22px;font-size:6.50px;font-weight:bold;color:#111;transform:translateX(-100%) scaleX(0.7077);transform-origin:100% 50%;">0,00 €</div>
<div class="t" style="left:452.50px;top:209.22px;font-size:6.50px;font-weight:bold;color:#111;transform:translateX(-100%) scaleX(0.7077);transform-origin:100% 50%;">0,00 €</div>
<div class="t" style="left:485.90px;top:209.22px;font-size:6.50px;font-weight:bold;color:#111;transform:translateX(-100%) scaleX(0.7077);transform-origin:100% 50%;">0,00 €</div>
<div class="t" style="left:520.10px;top:209.22px;font-size:6.50px;font-weight:bold;color:#111;transform:translateX(-100%) scaleX(0.7077);transform-origin:100% 50%;">0,00 €</div>
<div class="b" style="left:132.40px;top:217.24px;width:388.60px;height:11.94px;background:#9dc9ee"></div>
<div class="b" style="left:132.40px;top:216.94px;width:388.60px;height:0.60px;background:#c8c8c8"></div>
<div class="t" style="left:133.00px;top:221.16px;font-size:6.50px;font-weight:bold;color:#111;transform:scaleX(0.7138);transform-origin:0 50%;">Gesamtaufschlag %</div>
<div class="t" style="left:215.20px;top:221.16px;font-size:6.50px;font-weight:bold;color:#111;transform:translateX(-100%) scaleX(0.7077);transform-origin:100% 50%;">40,001 %</div>
<div class="t" style="left:249.10px;top:221.16px;font-size:6.50px;font-weight:bold;color:#111;transform:translateX(-100%) scaleX(0.7077);transform-origin:100% 50%;">35,001 %</div>
<div class="t" style="left:283.00px;top:221.16px;font-size:6.50px;font-weight:bold;color:#111;transform:translateX(-100%) scaleX(0.7077);transform-origin:100% 50%;">30,001 %</div>
<div class="t" style="left:317.20px;top:221.16px;font-size:6.50px;font-weight:bold;color:#111;transform:translateX(-100%) scaleX(0.7077);transform-origin:100% 50%;">25,001 %</div>
<div class="t" style="left:351.00px;top:221.16px;font-size:6.50px;font-weight:bold;color:#111;transform:translateX(-100%) scaleX(0.7077);transform-origin:100% 50%;">20,000 %</div>
<div class="t" style="left:384.60px;top:221.16px;font-size:6.50px;font-weight:bold;color:#111;transform:translateX(-100%) scaleX(0.7077);transform-origin:100% 50%;">15,000 %</div>
<div class="t" style="left:418.60px;top:221.16px;font-size:6.50px;font-weight:bold;color:#111;transform:translateX(-100%) scaleX(0.7077);transform-origin:100% 50%;">10,000 %</div>
<div class="t" style="left:452.50px;top:221.16px;font-size:6.50px;font-weight:bold;color:#111;transform:translateX(-100%) scaleX(0.7077);transform-origin:100% 50%;">7,001 %</div>
<div class="t" style="left:485.90px;top:221.16px;font-size:6.50px;font-weight:bold;color:#111;transform:translateX(-100%) scaleX(0.7077);transform-origin:100% 50%;">7,001 %</div>
<div class="t" style="left:520.10px;top:221.16px;font-size:6.50px;font-weight:bold;color:#111;transform:translateX(-100%) scaleX(0.7077);transform-origin:100% 50%;">56,862 %</div>
<div class="b" style="left:132.40px;top:229.18px;width:388.60px;height:11.94px;background:#ffffff"></div>
<div class="b" style="left:132.40px;top:228.88px;width:388.60px;height:0.60px;background:#c8c8c8"></div>
<div class="t" style="left:133.00px;top:233.10px;font-size:6.50px;font-weight:bold;color:#111;transform:scaleX(0.7138);transform-origin:0 50%;">Gesamtaufschlag</div>
<div class="t" style="left:215.20px;top:233.10px;font-size:6.50px;font-weight:bold;color:#111;transform:translateX(-100%) scaleX(0.7077);transform-origin:100% 50%;">197,12 €</div>
<div class="t" style="left:249.10px;top:233.10px;font-size:6.50px;font-weight:bold;color:#111;transform:translateX(-100%) scaleX(0.7077);transform-origin:100% 50%;">172,48 €</div>
<div class="t" style="left:283.00px;top:233.10px;font-size:6.50px;font-weight:bold;color:#111;transform:translateX(-100%) scaleX(0.7077);transform-origin:100% 50%;">147,84 €</div>
<div class="t" style="left:317.20px;top:233.10px;font-size:6.50px;font-weight:bold;color:#111;transform:translateX(-100%) scaleX(0.7077);transform-origin:100% 50%;">123,20 €</div>
<div class="t" style="left:351.00px;top:233.10px;font-size:6.50px;font-weight:bold;color:#111;transform:translateX(-100%) scaleX(0.7077);transform-origin:100% 50%;">98,56 €</div>
<div class="t" style="left:384.60px;top:233.10px;font-size:6.50px;font-weight:bold;color:#111;transform:translateX(-100%) scaleX(0.7077);transform-origin:100% 50%;">73,92 €</div>
<div class="t" style="left:418.60px;top:233.10px;font-size:6.50px;font-weight:bold;color:#111;transform:translateX(-100%) scaleX(0.7077);transform-origin:100% 50%;">49,28 €</div>
<div class="t" style="left:452.50px;top:233.10px;font-size:6.50px;font-weight:bold;color:#111;transform:translateX(-100%) scaleX(0.7077);transform-origin:100% 50%;">34,50 €</div>
<div class="t" style="left:485.90px;top:233.10px;font-size:6.50px;font-weight:bold;color:#111;transform:translateX(-100%) scaleX(0.7077);transform-origin:100% 50%;">34,50 €</div>
<div class="t" style="left:520.10px;top:233.10px;font-size:6.50px;font-weight:bold;color:#111;transform:translateX(-100%) scaleX(0.7077);transform-origin:100% 50%;">280,21 €</div>
<div class="b" style="left:132.40px;top:241.12px;width:388.60px;height:11.94px;background:#9dc9ee"></div>
<div class="b" style="left:132.40px;top:240.82px;width:388.60px;height:0.60px;background:#c8c8c8"></div>
<div class="t" style="left:133.00px;top:245.04px;font-size:6.50px;font-weight:bold;color:#111;transform:scaleX(0.7138);transform-origin:0 50%;">Gesamt VK</div>
<div class="t" style="left:215.20px;top:245.04px;font-size:6.50px;font-weight:bold;color:#111;transform:translateX(-100%) scaleX(0.7077);transform-origin:100% 50%;">689,91 €</div>
<div class="t" style="left:249.10px;top:245.04px;font-size:6.50px;font-weight:bold;color:#111;transform:translateX(-100%) scaleX(0.7077);transform-origin:100% 50%;">665,27 €</div>
<div class="t" style="left:283.00px;top:245.04px;font-size:6.50px;font-weight:bold;color:#111;transform:translateX(-100%) scaleX(0.7077);transform-origin:100% 50%;">640,63 €</div>
<div class="t" style="left:317.20px;top:245.04px;font-size:6.50px;font-weight:bold;color:#111;transform:translateX(-100%) scaleX(0.7077);transform-origin:100% 50%;">615,99 €</div>
<div class="t" style="left:351.00px;top:245.04px;font-size:6.50px;font-weight:bold;color:#111;transform:translateX(-100%) scaleX(0.7077);transform-origin:100% 50%;">591,35 €</div>
<div class="t" style="left:384.60px;top:245.04px;font-size:6.50px;font-weight:bold;color:#111;transform:translateX(-100%) scaleX(0.7077);transform-origin:100% 50%;">566,71 €</div>
<div class="t" style="left:418.60px;top:245.04px;font-size:6.50px;font-weight:bold;color:#111;transform:translateX(-100%) scaleX(0.7077);transform-origin:100% 50%;">542,07 €</div>
<div class="t" style="left:452.50px;top:245.04px;font-size:6.50px;font-weight:bold;color:#111;transform:translateX(-100%) scaleX(0.7077);transform-origin:100% 50%;">527,29 €</div>
<div class="t" style="left:485.90px;top:245.04px;font-size:6.50px;font-weight:bold;color:#111;transform:translateX(-100%) scaleX(0.7077);transform-origin:100% 50%;">527,29 €</div>
<div class="t" style="left:520.10px;top:245.04px;font-size:6.50px;font-weight:bold;color:#111;transform:translateX(-100%) scaleX(0.7077);transform-origin:100% 50%;">773,00 €</div>
<div class="b" style="left:132.40px;top:252.76px;width:388.60px;height:0.60px;background:#c8c8c8"></div>
<div class="b" style="left:182.05px;top:134.40px;width:0.70px;height:119.50px;background:#b9b9b9"></div>
<div class="b" style="left:216.15px;top:134.40px;width:0.70px;height:119.50px;background:#b9b9b9"></div>
<div class="b" style="left:250.05px;top:134.40px;width:0.70px;height:119.50px;background:#b9b9b9"></div>
<div class="b" style="left:283.95px;top:134.40px;width:0.70px;height:119.50px;background:#b9b9b9"></div>
<div class="b" style="left:318.15px;top:134.40px;width:0.70px;height:119.50px;background:#b9b9b9"></div>
<div class="b" style="left:351.95px;top:134.40px;width:0.70px;height:119.50px;background:#b9b9b9"></div>
<div class="b" style="left:385.55px;top:134.40px;width:0.70px;height:119.50px;background:#b9b9b9"></div>
<div class="b" style="left:419.55px;top:134.40px;width:0.70px;height:119.50px;background:#b9b9b9"></div>
<div class="b" style="left:453.45px;top:134.40px;width:0.70px;height:119.50px;background:#b9b9b9"></div>
<div class="b" style="left:486.85px;top:134.40px;width:0.70px;height:119.50px;background:#b9b9b9"></div>
<div class="t" style="left:199.45px;top:137.15px;font-size:6.50px;color:#222;-webkit-text-stroke:0.1px #222;transform:translateX(-50%) scaleX(0.7538);transform-origin:50% 50%;">VK 1</div>
<div class="t" style="left:233.45px;top:137.15px;font-size:6.50px;color:#222;-webkit-text-stroke:0.1px #222;transform:translateX(-50%) scaleX(0.7538);transform-origin:50% 50%;">VK 2</div>
<div class="t" style="left:267.35px;top:137.15px;font-size:6.50px;color:#222;-webkit-text-stroke:0.1px #222;transform:translateX(-50%) scaleX(0.7538);transform-origin:50% 50%;">VK 3</div>
<div class="t" style="left:301.40px;top:137.15px;font-size:6.50px;color:#222;-webkit-text-stroke:0.1px #222;transform:translateX(-50%) scaleX(0.7538);transform-origin:50% 50%;">VK 4</div>
<div class="t" style="left:335.40px;top:137.15px;font-size:6.50px;color:#222;-webkit-text-stroke:0.1px #222;transform:translateX(-50%) scaleX(0.7538);transform-origin:50% 50%;">VK 5</div>
<div class="t" style="left:369.10px;top:137.15px;font-size:6.50px;color:#222;-webkit-text-stroke:0.1px #222;transform:translateX(-50%) scaleX(0.7538);transform-origin:50% 50%;">VK 6</div>
<div class="t" style="left:402.90px;top:137.15px;font-size:6.50px;color:#222;-webkit-text-stroke:0.1px #222;transform:translateX(-50%) scaleX(0.7538);transform-origin:50% 50%;">VK 7</div>
<div class="t" style="left:436.85px;top:137.15px;font-size:6.50px;color:#222;-webkit-text-stroke:0.1px #222;transform:translateX(-50%) scaleX(0.7538);transform-origin:50% 50%;">VK 8</div>
<div class="t" style="left:470.50px;top:137.15px;font-size:6.50px;color:#222;-webkit-text-stroke:0.1px #222;transform:translateX(-50%) scaleX(0.7538);transform-origin:50% 50%;">VK 9</div>
<div class="t" style="left:504.30px;top:137.15px;font-size:6.50px;color:#222;-webkit-text-stroke:0.1px #222;transform:translateX(-50%) scaleX(0.7538);transform-origin:50% 50%;">VK 10</div>
<div class="b" style="left:313.00px;top:284.90px;width:8.60px;height:1.00px;background:repeating-linear-gradient(90deg,#666 0 1px,transparent 1px 1.8px)"></div>
<div class="b" style="left:19.10px;top:331.40px;width:1.10px;height:1.20px;background:#555"></div>
<div class="b" style="left:19.10px;top:333.90px;width:1.10px;height:1.20px;background:#555"></div>
<div class="b" style="left:19.10px;top:336.40px;width:1.10px;height:1.20px;background:#555"></div>
<div class="t" style="left:24.60px;top:293.45px;font-size:6.50px;color:#222;-webkit-text-stroke:0.1px #222;transform:scaleX(0.8077);transform-origin:0 50%;">Suche</div>
<div class="b" style="left:42.30px;top:292.50px;width:65.00px;height:8.40px;background:#fff;border:0.8px solid #a0a0a0;box-sizing:border-box"></div>
<div class="t" style="left:43.60px;top:293.55px;font-size:6.50px;color:#111;-webkit-text-stroke:0.1px #111;transform:scaleX(0.7846);transform-origin:0 50%;">grohe</div>
<div class="b" style="left:107.30px;top:292.10px;width:9.10px;height:8.80px;background:#dcdcdc;border:0.9px solid #a4a4a4;box-sizing:border-box"></div>
<div class="b" style="left:116.40px;top:292.10px;width:9.10px;height:8.80px;background:#dcdcdc;border:0.9px solid #a4a4a4;box-sizing:border-box"></div>
<div class="b" style="left:125.50px;top:292.10px;width:9.10px;height:8.80px;background:#dcdcdc;border:0.9px solid #a4a4a4;box-sizing:border-box"></div>
<div class="b" style="left:134.60px;top:292.10px;width:8.70px;height:8.80px;background:#dcdcdc;border:0.9px solid #a4a4a4;box-sizing:border-box"></div>
<svg class="b" style="left:108.60px;top:293.20px" width="7" height="7" viewBox="0 0 7 7"><circle cx="2.7" cy="2.7" r="1.9" fill="#fff" stroke="#666" stroke-width="0.8"/><path d="M4 4 L6.2 6.1" stroke="#2a7fd4" stroke-width="1.4"/></svg>
<svg class="b" style="left:118.60px;top:293.30px" width="5" height="7" viewBox="0 0 5 7"><rect x="0.6" y="1" width="3.8" height="5.2" rx="0.8" fill="#9a9a9a" stroke="#555" stroke-width="0.6"/><rect x="1" y="2.8" width="3" height="0.6" fill="#e0e0e0"/><rect x="1" y="4.4" width="3" height="0.6" fill="#e0e0e0"/></svg>
<svg class="b" style="left:127.40px;top:293.30px" width="7" height="7" viewBox="0 0 7 7"><circle cx="2.9" cy="3.1" r="2.5" fill="#555"/><circle cx="2.9" cy="3.1" r="1.2" fill="#ccc"/><path d="M3.4 3.6 L5.8 6" stroke="#2a7fd4" stroke-width="1.3"/></svg>
<svg class="b" style="left:136.40px;top:293.60px" width="6" height="6" viewBox="0 0 6 6"><rect x="0.3" y="0.3" width="4.8" height="4.8" fill="#b8d8f2" stroke="#8ab" stroke-width="0.4"/><path d="M1.5 1.6 L4 4" stroke="#3a8ad8" stroke-width="1.1"/></svg>
<div class="t" style="left:146.80px;top:293.55px;font-size:6.50px;color:#222;-webkit-text-stroke:0.1px #222;transform:scaleX(0.8262);transform-origin:0 50%;">Suchfilter</div>
<div class="b" style="left:172.00px;top:292.20px;width:79.20px;height:8.80px;background:#fff;border:0.8px solid #a0a0a0;box-sizing:border-box"></div>
<div class="b" style="left:243.60px;top:292.20px;width:7.60px;height:8.80px;background:#e6e6e6;border:0.8px solid #a0a0a0;box-sizing:border-box"></div>
<svg class="b" style="left:245.40px;top:295.20px" width="4" height="3" viewBox="0 0 4 3"><path d="M0.4 0.4 L2 2.2 L3.6 0.4" stroke="#333" stroke-width="0.8" fill="none"/></svg>
<div class="t" style="left:173.00px;top:293.75px;font-size:6.50px;color:#111;-webkit-text-stroke:0.1px #111;transform:scaleX(0.7754);transform-origin:0 50%;">Kurztext</div>
<div class="b" style="left:25.40px;top:305.20px;width:585.00px;height:117.00px;background:#fff;border:0.9px solid #9a9a9a;border-bottom:none;box-sizing:border-box"></div>
<div class="b" style="left:26.30px;top:306.10px;width:576.20px;height:8.60px;background:#efefef"></div>
<div class="b" style="left:26.30px;top:314.30px;width:576.20px;height:0.80px;background:#bdbdbd"></div>
<div class="t" style="left:32.00px;top:307.35px;font-size:6.50px;color:#222;-webkit-text-stroke:0.1px #222;transform:scaleX(0.7954);transform-origin:0 50%;">Lief. Name</div>
<div class="t" style="left:85.00px;top:307.35px;font-size:6.50px;color:#222;-webkit-text-stroke:0.1px #222;transform:scaleX(0.8000);transform-origin:0 50%;">Lief</div>
<div class="t" style="left:116.25px;top:307.35px;font-size:6.50px;color:#222;-webkit-text-stroke:0.1px #222;transform:scaleX(0.7692);transform-origin:0 50%;">Artikel-Nr</div>
<div class="t" style="left:160.50px;top:307.35px;font-size:6.50px;color:#222;-webkit-text-stroke:0.1px #222;transform:scaleX(0.7846);transform-origin:0 50%;">Suchbegriff</div>
<div class="t" style="left:257.00px;top:307.35px;font-size:6.50px;color:#222;-webkit-text-stroke:0.1px #222;transform:scaleX(0.7754);transform-origin:0 50%;">Kurztext</div>
<div class="t" style="left:367.50px;top:307.35px;font-size:6.50px;color:#222;-webkit-text-stroke:0.1px #222;transform:scaleX(0.7692);transform-origin:0 50%;">ME</div>
<div class="t" style="left:383.25px;top:307.35px;font-size:6.50px;color:#222;-webkit-text-stroke:0.1px #222;transform:scaleX(0.7692);transform-origin:0 50%;">Listenpreis</div>
<div class="t" style="left:427.50px;top:307.35px;font-size:6.50px;color:#222;-webkit-text-stroke:0.1px #222;transform:scaleX(0.7692);transform-origin:0 50%;">Einkaufspreis</div>
<div class="t" style="left:471.25px;top:307.35px;font-size:6.50px;color:#222;-webkit-text-stroke:0.1px #222;transform:scaleX(0.7646);transform-origin:0 50%;">VK-Preis 1</div>
<div class="t" style="left:516.25px;top:307.35px;font-size:6.50px;color:#222;-webkit-text-stroke:0.1px #222;transform:scaleX(0.7646);transform-origin:0 50%;">VK-Preis 2</div>
<div class="t" style="left:560.00px;top:307.35px;font-size:6.50px;color:#222;-webkit-text-stroke:0.1px #222;transform:scaleX(0.7646);transform-origin:0 50%;">VK-Preis 3</div>
<svg class="b" style="left:248.80px;top:308.60px" width="4" height="3" viewBox="0 0 4 3"><path d="M0.3 2.6 L2 0.4 L3.7 2.6 Z" fill="#444"/></svg>
<div class="b" style="left:26.30px;top:306.10px;width:4.20px;height:116.00px;background:#f0f0f0"></div>
<div class="b" style="left:30.50px;top:314.85px;width:572.00px;height:10.95px;background:#9dc9ee"></div>
<div class="b" style="left:26.30px;top:325.40px;width:4.20px;height:0.80px;background:#c4c4c4"></div>
<div class="t" style="left:31.80px;top:317.98px;font-size:6.50px;font-weight:bold;color:#111;transform:scaleX(0.7262);transform-origin:0 50%;">GIENGER</div>
<div class="t" style="left:85.20px;top:317.98px;font-size:6.50px;font-weight:bold;color:#111;transform:scaleX(0.7262);transform-origin:0 50%;">064</div>
<div class="t" style="left:116.30px;top:317.98px;font-size:6.50px;font-weight:bold;color:#111;transform:scaleX(0.7262);transform-origin:0 50%;">ZUGKV32</div>
<div class="t" style="left:160.50px;top:317.98px;font-size:6.50px;font-weight:bold;color:#111;transform:scaleX(0.7262);transform-origin:0 50%;">ABLGARN</div>
<div class="t" style="left:257.00px;top:317.48px;font-size:6.50px;font-weight:bold;color:#111;transform:scaleX(0.7477);transform-origin:0 50%;">Zugstangen-Ablaufgarnitur 1 1/4"&nbsp; verchromt</div>
<div class="t" style="left:367.60px;top:317.98px;font-size:6.50px;font-weight:bold;color:#111;transform:scaleX(0.7262);transform-origin:0 50%;">ST</div>
<div class="t" style="left:424.65px;top:317.98px;font-size:6.50px;font-weight:bold;color:#111;transform:translateX(-100%) scaleX(0.7262);transform-origin:100% 50%;">257,00 €</div>
<div class="t" style="left:468.60px;top:317.98px;font-size:6.50px;font-weight:bold;color:#111;transform:translateX(-100%) scaleX(0.7262);transform-origin:100% 50%;">179,90 €</div>
<div class="t" style="left:512.90px;top:317.98px;font-size:6.50px;font-weight:bold;color:#111;transform:translateX(-100%) scaleX(0.7262);transform-origin:100% 50%;">251,86 €</div>
<div class="t" style="left:557.15px;top:317.98px;font-size:6.50px;font-weight:bold;color:#111;transform:translateX(-100%) scaleX(0.7262);transform-origin:100% 50%;">242,87 €</div>
<div class="t" style="left:600.90px;top:317.98px;font-size:6.50px;font-weight:bold;color:#111;transform:translateX(-100%) scaleX(0.7262);transform-origin:100% 50%;">233,87 €</div>
<div class="b" style="left:30.50px;top:325.80px;width:572.00px;height:10.95px;background:#ffffff"></div>
<div class="b" style="left:26.30px;top:336.35px;width:4.20px;height:0.80px;background:#c4c4c4"></div>
<div class="t" style="left:31.80px;top:328.93px;font-size:6.50px;font-weight:bold;color:#111;transform:scaleX(0.7262);transform-origin:0 50%;">GIENGER</div>
<div class="t" style="left:85.20px;top:328.93px;font-size:6.50px;font-weight:bold;color:#111;transform:scaleX(0.7262);transform-origin:0 50%;">064</div>
<div class="t" style="left:116.30px;top:328.93px;font-size:6.50px;font-weight:bold;color:#111;transform:scaleX(0.7262);transform-origin:0 50%;">ALLUUPWT</div>
<div class="t" style="left:160.50px;top:328.93px;font-size:6.50px;font-weight:bold;color:#111;transform:scaleX(0.7262);transform-origin:0 50%;">ALLCURE</div>
<div class="t" style="left:257.00px;top:328.43px;font-size:6.50px;font-weight:bold;color:#111;transform:scaleX(0.7477);transform-origin:0 50%;">UP-Einbaukörper Allure</div>
<div class="t" style="left:367.60px;top:328.93px;font-size:6.50px;font-weight:bold;color:#111;transform:scaleX(0.7262);transform-origin:0 50%;">ST</div>
<div class="t" style="left:424.65px;top:328.93px;font-size:6.50px;font-weight:bold;color:#111;transform:translateX(-100%) scaleX(0.7262);transform-origin:100% 50%;">353,00 €</div>
<div class="t" style="left:468.60px;top:328.93px;font-size:6.50px;font-weight:bold;color:#111;transform:translateX(-100%) scaleX(0.7262);transform-origin:100% 50%;">198,56 €</div>
<div class="t" style="left:512.90px;top:328.93px;font-size:6.50px;font-weight:bold;color:#111;transform:translateX(-100%) scaleX(0.7262);transform-origin:100% 50%;">277,98 €</div>
<div class="t" style="left:557.15px;top:328.93px;font-size:6.50px;font-weight:bold;color:#111;transform:translateX(-100%) scaleX(0.7262);transform-origin:100% 50%;">268,06 €</div>
<div class="t" style="left:600.90px;top:328.93px;font-size:6.50px;font-weight:bold;color:#111;transform:translateX(-100%) scaleX(0.7262);transform-origin:100% 50%;">258,13 €</div>
<div class="b" style="left:30.50px;top:336.75px;width:572.00px;height:10.95px;background:#9dc9ee"></div>
<div class="b" style="left:26.30px;top:347.30px;width:4.20px;height:0.80px;background:#c4c4c4"></div>
<div class="t" style="left:31.80px;top:339.88px;font-size:6.50px;font-weight:bold;color:#111;transform:scaleX(0.7262);transform-origin:0 50%;">GIENGER</div>
<div class="t" style="left:85.20px;top:339.88px;font-size:6.50px;font-weight:bold;color:#111;transform:scaleX(0.7262);transform-origin:0 50%;">064</div>
<div class="t" style="left:116.30px;top:339.88px;font-size:6.50px;font-weight:bold;color:#111;transform:scaleX(0.7262);transform-origin:0 50%;">ALLUU</div>
<div class="t" style="left:160.50px;top:339.88px;font-size:6.50px;font-weight:bold;color:#111;transform:scaleX(0.7262);transform-origin:0 50%;">ALLURE</div>
<div class="t" style="left:257.00px;top:339.38px;font-size:6.50px;font-weight:bold;color:#111;transform:scaleX(0.7477);transform-origin:0 50%;">Einhand-Waschtischbatterie Allure</div>
<div class="t" style="left:367.60px;top:339.88px;font-size:6.50px;font-weight:bold;color:#111;transform:scaleX(0.7262);transform-origin:0 50%;">ST</div>
<div class="t" style="left:424.65px;top:339.88px;font-size:6.50px;font-weight:bold;color:#111;transform:translateX(-100%) scaleX(0.7262);transform-origin:100% 50%;">679,00 €</div>
<div class="t" style="left:468.60px;top:339.88px;font-size:6.50px;font-weight:bold;color:#111;transform:translateX(-100%) scaleX(0.7262);transform-origin:100% 50%;">432,86 €</div>
<div class="t" style="left:512.90px;top:339.88px;font-size:6.50px;font-weight:bold;color:#111;transform:translateX(-100%) scaleX(0.7262);transform-origin:100% 50%;">606,00 €</div>
<div class="t" style="left:557.15px;top:339.88px;font-size:6.50px;font-weight:bold;color:#111;transform:translateX(-100%) scaleX(0.7262);transform-origin:100% 50%;">584,36 €</div>
<div class="t" style="left:600.90px;top:339.88px;font-size:6.50px;font-weight:bold;color:#111;transform:translateX(-100%) scaleX(0.7262);transform-origin:100% 50%;">562,72 €</div>
<div class="b" style="left:30.50px;top:347.70px;width:572.00px;height:10.95px;background:#ffffff"></div>
<div class="b" style="left:26.30px;top:358.25px;width:4.20px;height:0.80px;background:#c4c4c4"></div>
<div class="t" style="left:31.80px;top:350.83px;font-size:6.50px;font-weight:bold;color:#111;transform:scaleX(0.7262);transform-origin:0 50%;">GIENGER</div>
<div class="t" style="left:85.20px;top:350.83px;font-size:6.50px;font-weight:bold;color:#111;transform:scaleX(0.7262);transform-origin:0 50%;">064</div>
<div class="t" style="left:116.30px;top:350.83px;font-size:6.50px;font-weight:bold;color:#111;transform:scaleX(0.7262);transform-origin:0 50%;">ALLUFWT</div>
<div class="t" style="left:160.50px;top:350.83px;font-size:6.50px;font-weight:bold;color:#111;transform:scaleX(0.7262);transform-origin:0 50%;">ALLURE</div>
<div class="t" style="left:257.00px;top:350.33px;font-size:6.50px;font-weight:bold;color:#111;transform:scaleX(0.7477);transform-origin:0 50%;">Farbset Allure verchromt</div>
<div class="t" style="left:367.60px;top:350.83px;font-size:6.50px;font-weight:bold;color:#111;transform:scaleX(0.7262);transform-origin:0 50%;">ST</div>
<div class="t" style="left:424.65px;top:350.83px;font-size:6.50px;font-weight:bold;color:#111;transform:translateX(-100%) scaleX(0.7262);transform-origin:100% 50%;">962,00 €</div>
<div class="t" style="left:468.60px;top:350.83px;font-size:6.50px;font-weight:bold;color:#111;transform:translateX(-100%) scaleX(0.7262);transform-origin:100% 50%;">613,28 €</div>
<div class="t" style="left:512.90px;top:350.83px;font-size:6.50px;font-weight:bold;color:#111;transform:translateX(-100%) scaleX(0.7262);transform-origin:100% 50%;">858,59 €</div>
<div class="t" style="left:557.15px;top:350.83px;font-size:6.50px;font-weight:bold;color:#111;transform:translateX(-100%) scaleX(0.7262);transform-origin:100% 50%;">827,93 €</div>
<div class="t" style="left:600.90px;top:350.83px;font-size:6.50px;font-weight:bold;color:#111;transform:translateX(-100%) scaleX(0.7262);transform-origin:100% 50%;">797,26 €</div>
<div class="b" style="left:30.50px;top:358.65px;width:572.00px;height:10.95px;background:#9dc9ee"></div>
<div class="b" style="left:26.30px;top:369.20px;width:4.20px;height:0.80px;background:#c4c4c4"></div>
<div class="t" style="left:31.80px;top:361.78px;font-size:6.50px;font-weight:bold;color:#111;transform:scaleX(0.7262);transform-origin:0 50%;">GIENGER</div>
<div class="t" style="left:85.20px;top:361.78px;font-size:6.50px;font-weight:bold;color:#111;transform:scaleX(0.7262);transform-origin:0 50%;">064</div>
<div class="t" style="left:116.30px;top:361.78px;font-size:6.50px;font-weight:bold;color:#111;transform:scaleX(0.7262);transform-origin:0 50%;">ALLUFWT220</div>
<div class="t" style="left:160.50px;top:361.78px;font-size:6.50px;font-weight:bold;color:#111;transform:scaleX(0.7262);transform-origin:0 50%;">ALLURE</div>
<div class="t" style="left:257.00px;top:361.28px;font-size:6.50px;font-weight:bold;color:#111;transform:scaleX(0.7477);transform-origin:0 50%;">Farbset Allure verchromt Ausl.220mm</div>
<div class="t" style="left:367.60px;top:361.78px;font-size:6.50px;font-weight:bold;color:#111;transform:scaleX(0.7262);transform-origin:0 50%;">ST</div>
<div class="t" style="left:424.65px;top:361.78px;font-size:6.50px;font-weight:bold;color:#111;transform:translateX(-100%) scaleX(0.7262);transform-origin:100% 50%;">1.010,00 €</div>
<div class="t" style="left:468.60px;top:361.78px;font-size:6.50px;font-weight:bold;color:#111;transform:translateX(-100%) scaleX(0.7262);transform-origin:100% 50%;">643,88 €</div>
<div class="t" style="left:512.90px;top:361.78px;font-size:6.50px;font-weight:bold;color:#111;transform:translateX(-100%) scaleX(0.7262);transform-origin:100% 50%;">901,43 €</div>
<div class="t" style="left:557.15px;top:361.78px;font-size:6.50px;font-weight:bold;color:#111;transform:translateX(-100%) scaleX(0.7262);transform-origin:100% 50%;">869,24 €</div>
<div class="t" style="left:600.90px;top:361.78px;font-size:6.50px;font-weight:bold;color:#111;transform:translateX(-100%) scaleX(0.7262);transform-origin:100% 50%;">837,04 €</div>
<div class="b" style="left:30.50px;top:369.60px;width:572.00px;height:10.95px;background:#6690d2"></div>
<div class="b" style="left:26.30px;top:380.15px;width:4.20px;height:0.80px;background:#c4c4c4"></div>
<div class="t" style="left:31.80px;top:372.73px;font-size:6.50px;font-weight:bold;color:#111;transform:scaleX(0.7262);transform-origin:0 50%;">GIENGER</div>
<div class="t" style="left:85.20px;top:372.73px;font-size:6.50px;font-weight:bold;color:#111;transform:scaleX(0.7262);transform-origin:0 50%;">064</div>
<div class="t" style="left:116.30px;top:372.73px;font-size:6.50px;font-weight:bold;color:#111;transform:scaleX(0.7262);transform-origin:0 50%;">ALLU242</div>
<div class="t" style="left:160.50px;top:372.73px;font-size:6.50px;font-weight:bold;color:#111;transform:scaleX(0.7262);transform-origin:0 50%;">ALLURE</div>
<div class="t" style="left:257.00px;top:372.23px;font-size:6.50px;font-weight:bold;color:#111;transform:scaleX(0.7477);transform-origin:0 50%;">Einhand-Waschtischbatterie Allure</div>
<div class="t" style="left:367.60px;top:372.73px;font-size:6.50px;font-weight:bold;color:#111;transform:scaleX(0.7262);transform-origin:0 50%;">ST</div>
<div class="t" style="left:424.65px;top:372.73px;font-size:6.50px;font-weight:bold;color:#111;transform:translateX(-100%) scaleX(0.7262);transform-origin:100% 50%;">773,00 €</div>
<div class="t" style="left:468.60px;top:372.73px;font-size:6.50px;font-weight:bold;color:#111;transform:translateX(-100%) scaleX(0.7262);transform-origin:100% 50%;">492,79 €</div>
<div class="t" style="left:512.90px;top:372.73px;font-size:6.50px;font-weight:bold;color:#111;transform:translateX(-100%) scaleX(0.7262);transform-origin:100% 50%;">689,91 €</div>
<div class="t" style="left:557.15px;top:372.73px;font-size:6.50px;font-weight:bold;color:#111;transform:translateX(-100%) scaleX(0.7262);transform-origin:100% 50%;">665,27 €</div>
<div class="t" style="left:600.90px;top:372.73px;font-size:6.50px;font-weight:bold;color:#111;transform:translateX(-100%) scaleX(0.7262);transform-origin:100% 50%;">640,63 €</div>
<div class="b" style="left:30.50px;top:380.55px;width:572.00px;height:10.95px;background:#9dc9ee"></div>
<div class="b" style="left:26.30px;top:391.10px;width:4.20px;height:0.80px;background:#c4c4c4"></div>
<div class="t" style="left:31.80px;top:383.68px;font-size:6.50px;font-weight:bold;color:#111;transform:scaleX(0.7262);transform-origin:0 50%;">GIENGER</div>
<div class="t" style="left:85.20px;top:383.68px;font-size:6.50px;font-weight:bold;color:#111;transform:scaleX(0.7262);transform-origin:0 50%;">064</div>
<div class="t" style="left:116.30px;top:383.68px;font-size:6.50px;font-weight:bold;color:#111;transform:scaleX(0.7262);transform-origin:0 50%;">ALLUEJ</div>
<div class="t" style="left:160.50px;top:383.68px;font-size:6.50px;font-weight:bold;color:#111;transform:scaleX(0.7262);transform-origin:0 50%;">ALLURE</div>
<div class="t" style="left:257.00px;top:383.18px;font-size:6.50px;font-weight:bold;color:#111;transform:scaleX(0.7477);transform-origin:0 50%;">Einhand-Waschtischbatterie Allure EcoJoy</div>
<div class="t" style="left:367.60px;top:383.68px;font-size:6.50px;font-weight:bold;color:#111;transform:scaleX(0.7262);transform-origin:0 50%;">ST</div>
<div class="t" style="left:424.65px;top:383.68px;font-size:6.50px;font-weight:bold;color:#111;transform:translateX(-100%) scaleX(0.7262);transform-origin:100% 50%;">490,00 €</div>
<div class="t" style="left:468.60px;top:383.68px;font-size:6.50px;font-weight:bold;color:#111;transform:translateX(-100%) scaleX(0.7262);transform-origin:100% 50%;">312,38 €</div>
<div class="t" style="left:512.90px;top:383.68px;font-size:6.50px;font-weight:bold;color:#111;transform:translateX(-100%) scaleX(0.7262);transform-origin:100% 50%;">437,33 €</div>
<div class="t" style="left:557.15px;top:383.68px;font-size:6.50px;font-weight:bold;color:#111;transform:translateX(-100%) scaleX(0.7262);transform-origin:100% 50%;">421,71 €</div>
<div class="t" style="left:600.90px;top:383.68px;font-size:6.50px;font-weight:bold;color:#111;transform:translateX(-100%) scaleX(0.7262);transform-origin:100% 50%;">406,09 €</div>
<div class="b" style="left:30.50px;top:391.50px;width:572.00px;height:10.95px;background:#ffffff"></div>
<div class="b" style="left:26.30px;top:402.05px;width:4.20px;height:0.80px;background:#c4c4c4"></div>
<div class="t" style="left:31.80px;top:394.62px;font-size:6.50px;font-weight:bold;color:#111;transform:scaleX(0.7262);transform-origin:0 50%;">GIENGER</div>
<div class="t" style="left:85.20px;top:394.62px;font-size:6.50px;font-weight:bold;color:#111;transform:scaleX(0.7262);transform-origin:0 50%;">064</div>
<div class="t" style="left:116.30px;top:394.62px;font-size:6.50px;font-weight:bold;color:#111;transform:scaleX(0.7262);transform-origin:0 50%;">ALLUEJU</div>
<div class="t" style="left:160.50px;top:394.62px;font-size:6.50px;font-weight:bold;color:#111;transform:scaleX(0.7262);transform-origin:0 50%;">ALLURE</div>
<div class="t" style="left:257.00px;top:394.12px;font-size:6.50px;font-weight:bold;color:#111;transform:scaleX(0.7477);transform-origin:0 50%;">Einhand-Waschtischbatterie Allure EcoJoy</div>
<div class="t" style="left:367.60px;top:394.62px;font-size:6.50px;font-weight:bold;color:#111;transform:scaleX(0.7262);transform-origin:0 50%;">ST</div>
<div class="t" style="left:424.65px;top:394.62px;font-size:6.50px;font-weight:bold;color:#111;transform:translateX(-100%) scaleX(0.7262);transform-origin:100% 50%;">679,00 €</div>
<div class="t" style="left:468.60px;top:394.62px;font-size:6.50px;font-weight:bold;color:#111;transform:translateX(-100%) scaleX(0.7262);transform-origin:100% 50%;">432,86 €</div>
<div class="t" style="left:512.90px;top:394.62px;font-size:6.50px;font-weight:bold;color:#111;transform:translateX(-100%) scaleX(0.7262);transform-origin:100% 50%;">606,00 €</div>
<div class="t" style="left:557.15px;top:394.62px;font-size:6.50px;font-weight:bold;color:#111;transform:translateX(-100%) scaleX(0.7262);transform-origin:100% 50%;">584,36 €</div>
<div class="t" style="left:600.90px;top:394.62px;font-size:6.50px;font-weight:bold;color:#111;transform:translateX(-100%) scaleX(0.7262);transform-origin:100% 50%;">562,72 €</div>
<div class="b" style="left:30.50px;top:402.45px;width:572.00px;height:10.95px;background:#9dc9ee"></div>
<div class="b" style="left:26.30px;top:413.00px;width:4.20px;height:0.80px;background:#c4c4c4"></div>
<div class="t" style="left:31.80px;top:405.58px;font-size:6.50px;font-weight:bold;color:#111;transform:scaleX(0.7262);transform-origin:0 50%;">GIENGER</div>
<div class="t" style="left:85.20px;top:405.58px;font-size:6.50px;font-weight:bold;color:#111;transform:scaleX(0.7262);transform-origin:0 50%;">064</div>
<div class="t" style="left:116.30px;top:405.58px;font-size:6.50px;font-weight:bold;color:#111;transform:scaleX(0.7262);transform-origin:0 50%;">ALLUBD</div>
<div class="t" style="left:160.50px;top:405.58px;font-size:6.50px;font-weight:bold;color:#111;transform:scaleX(0.7262);transform-origin:0 50%;">ALLURE</div>
<div class="t" style="left:257.00px;top:405.08px;font-size:6.50px;font-weight:bold;color:#111;transform:scaleX(0.7477);transform-origin:0 50%;">Einhand-Bidetbatterie Allure</div>
<div class="t" style="left:367.60px;top:405.58px;font-size:6.50px;font-weight:bold;color:#111;transform:scaleX(0.7262);transform-origin:0 50%;">ST</div>
<div class="t" style="left:424.65px;top:405.58px;font-size:6.50px;font-weight:bold;color:#111;transform:translateX(-100%) scaleX(0.7262);transform-origin:100% 50%;">1.022,00 €</div>
<div class="t" style="left:468.60px;top:405.58px;font-size:6.50px;font-weight:bold;color:#111;transform:translateX(-100%) scaleX(0.7262);transform-origin:100% 50%;">651,53 €</div>
<div class="t" style="left:512.90px;top:405.58px;font-size:6.50px;font-weight:bold;color:#111;transform:translateX(-100%) scaleX(0.7262);transform-origin:100% 50%;">912,14 €</div>
<div class="t" style="left:557.15px;top:405.58px;font-size:6.50px;font-weight:bold;color:#111;transform:translateX(-100%) scaleX(0.7262);transform-origin:100% 50%;">879,57 €</div>
<div class="t" style="left:600.90px;top:405.58px;font-size:6.50px;font-weight:bold;color:#111;transform:translateX(-100%) scaleX(0.7262);transform-origin:100% 50%;">846,99 €</div>
<div class="b" style="left:30.50px;top:413.40px;width:572.00px;height:10.95px;background:#ffffff"></div>
<div class="b" style="left:26.30px;top:423.95px;width:4.20px;height:0.80px;background:#c4c4c4"></div>
<div class="t" style="left:31.80px;top:416.53px;font-size:6.50px;font-weight:bold;color:#111;transform:scaleX(0.7262);transform-origin:0 50%;">GIENGER</div>
<div class="t" style="left:85.20px;top:416.53px;font-size:6.50px;font-weight:bold;color:#111;transform:scaleX(0.7262);transform-origin:0 50%;">064</div>
<div class="t" style="left:116.30px;top:416.53px;font-size:6.50px;font-weight:bold;color:#111;transform:scaleX(0.7262);transform-origin:0 50%;">ALLUWN</div>
<div class="t" style="left:160.50px;top:416.53px;font-size:6.50px;font-weight:bold;color:#111;transform:scaleX(0.7262);transform-origin:0 50%;">ALLURE</div>
<div class="t" style="left:257.00px;top:416.03px;font-size:6.50px;font-weight:bold;color:#111;transform:scaleX(0.7477);transform-origin:0 50%;">Einhand-AP-Badebatterie Neu Allure</div>
<div class="t" style="left:367.60px;top:416.53px;font-size:6.50px;font-weight:bold;color:#111;transform:scaleX(0.7262);transform-origin:0 50%;">ST</div>
<div class="t" style="left:424.65px;top:416.53px;font-size:6.50px;font-weight:bold;color:#111;transform:translateX(-100%) scaleX(0.7262);transform-origin:100% 50%;">1.257,00 €</div>
<div class="t" style="left:468.60px;top:416.53px;font-size:6.50px;font-weight:bold;color:#111;transform:translateX(-100%) scaleX(0.7262);transform-origin:100% 50%;">801,34 €</div>
<div class="t" style="left:512.90px;top:416.53px;font-size:6.50px;font-weight:bold;color:#111;transform:translateX(-100%) scaleX(0.7262);transform-origin:100% 50%;">1.121,88 €</div>
<div class="t" style="left:557.15px;top:416.53px;font-size:6.50px;font-weight:bold;color:#111;transform:translateX(-100%) scaleX(0.7262);transform-origin:100% 50%;">1.081,81 €</div>
<div class="t" style="left:600.90px;top:416.53px;font-size:6.50px;font-weight:bold;color:#111;transform:translateX(-100%) scaleX(0.7262);transform-origin:100% 50%;">1.041,74 €</div>
<div class="b" style="left:30.10px;top:306.10px;width:0.70px;height:116.00px;background:#c4c4c4"></div>
<svg class="b" style="left:26.80px;top:373.50px" width="3" height="3.5" viewBox="0 0 3 3.5"><path d="M0.6 0.3 L2.4 1.75 L0.6 3.2 Z" fill="#222"/></svg>
<div class="b" style="left:83.35px;top:306.10px;width:0.80px;height:116.00px;background:rgba(160,160,160,0.45)"></div>
<div class="b" style="left:114.10px;top:306.10px;width:0.80px;height:116.00px;background:rgba(160,160,160,0.45)"></div>
<div class="b" style="left:158.90px;top:306.10px;width:0.80px;height:116.00px;background:rgba(160,160,160,0.45)"></div>
<div class="b" style="left:254.60px;top:306.10px;width:0.80px;height:116.00px;background:rgba(160,160,160,0.45)"></div>
<div class="b" style="left:365.85px;top:306.10px;width:0.80px;height:116.00px;background:rgba(160,160,160,0.45)"></div>
<div class="b" style="left:380.85px;top:306.10px;width:0.80px;height:116.00px;background:rgba(160,160,160,0.45)"></div>
<div class="b" style="left:425.85px;top:306.10px;width:0.80px;height:116.00px;background:rgba(160,160,160,0.45)"></div>
<div class="b" style="left:469.80px;top:306.10px;width:0.80px;height:116.00px;background:rgba(160,160,160,0.45)"></div>
<div class="b" style="left:514.10px;top:306.10px;width:0.80px;height:116.00px;background:rgba(160,160,160,0.45)"></div>
<div class="b" style="left:558.35px;top:306.10px;width:0.80px;height:116.00px;background:rgba(160,160,160,0.45)"></div>
<div class="b" style="left:602.50px;top:306.10px;width:7.00px;height:116.00px;background:#e8e8e8;border-left:0.8px solid #d0d0d0;box-sizing:border-box"></div>
<svg class="b" style="left:603.80px;top:307.80px" width="4.6" height="3" viewBox="0 0 4.6 3"><path d="M0.5 2.5 L2.3 0.6 L4.1 2.5" stroke="#333" stroke-width="0.9" fill="none"/></svg>
<div class="b" style="left:603.40px;top:312.80px;width:5.60px;height:10.70px;background:#c2c2c2"></div>
<div class="b" style="left:609.50px;top:305.20px;width:0.90px;height:117.00px;background:#9a9a9a"></div>
<div class="b" style="left:612.80px;top:0.00px;width:1.10px;height:422.00px;background:#6a6a6a"></div>
<div class="b" style="left:613.90px;top:26.00px;width:0.70px;height:396.00px;background:#d6d6d6"></div>
</body></html>
